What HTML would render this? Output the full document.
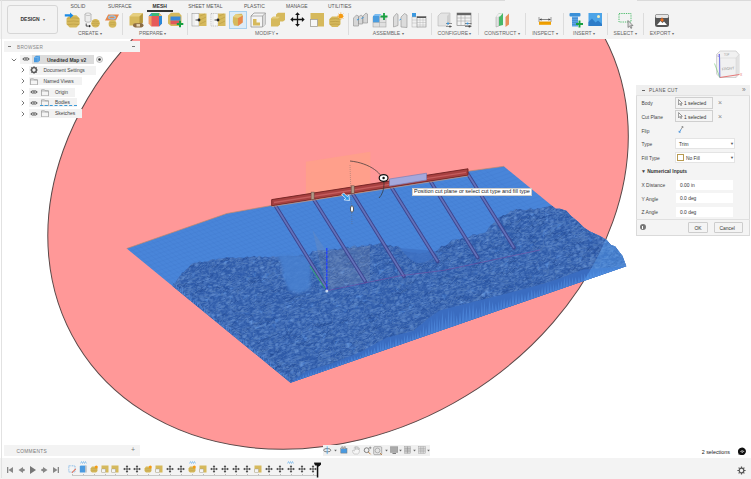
<!DOCTYPE html><html><head><meta charset="utf-8"><style>
*{box-sizing:border-box}
html,body{margin:0;padding:0;width:751px;height:479px;overflow:hidden;background:#fff;font-family:"Liberation Sans",sans-serif;}
.a{position:absolute;white-space:nowrap}
#tb{position:absolute;left:0;top:0;width:751px;height:39px;background:#f3f3f3}
.tab{position:absolute;top:1.6px;font-size:5.0px;color:#555;line-height:8px}
.grp{position:absolute;top:29.5px;font-size:5.1px;color:#666;line-height:7px}
.sep{position:absolute;top:13px;width:1px;height:22px;background:#dcdcdc}
.bt{position:absolute;font-size:4.9px;color:#444;line-height:8px;white-space:nowrap}
.pl{position:absolute;font-size:4.9px;color:#444;line-height:8px;white-space:nowrap}
.fld{position:absolute;background:#fff;border:1px solid #e4e4e4}
</style></head><body>
<svg class="a" style="left:0;top:0" width="751" height="479" viewBox="0 0 751 479">
<defs><clipPath id="tc"><polygon points="126.7,248.5 226.7,213.5 273.0,205.2 468.0,171.2 503.8,166.3 555.7,208.8 560.0,208.8 566.3,210.7 571.4,216.3 577.6,221.3 583.9,227.6 590.0,231.4 600.0,236.0 606.7,240.0 610.9,245.0 615.0,246.3 622.5,255.9 626.3,266.3 290.5,382.7"/></clipPath>
<mask id="outm"><rect width="751" height="479" fill="#fff"/><ellipse cx="338.05" cy="185.95" rx="305.18" ry="245.85" transform="rotate(148.55 338.05 185.95)" fill="#000"/></mask></defs>
<ellipse cx="338.05" cy="185.95" rx="305.18" ry="245.85" transform="rotate(148.55 338.05 185.95)" fill="#ff9898" stroke="#5a4848" stroke-width="1"/>
<g clip-path="url(#tc)">
<rect x="100" y="150" width="540" height="240" fill="#4985d9"/>




































































































<path d="M126,248.3L640,68.9M126,252.5L640,73.1M126,256.7L640,77.3M126,260.9L640,81.5M126,265.1L640,85.7M126,269.3L640,89.9M126,273.5L640,94.1M126,277.7L640,98.3M126,281.9L640,102.5M126,286.1L640,106.7M126,290.3L640,110.9M126,294.5L640,115.1M126,298.7L640,119.3M126,302.9L640,123.5M126,307.1L640,127.7M126,311.3L640,131.9M126,315.5L640,136.1M126,319.7L640,140.3M126,323.9L640,144.5M126,328.1L640,148.7M126,332.3L640,152.9M126,336.5L640,157.1M126,340.7L640,161.3M126,344.9L640,165.5M126,349.1L640,169.7M126,353.3L640,173.9M126,357.5L640,178.1M126,361.7L640,182.3M126,365.9L640,186.5M126,370.1L640,190.7M126,374.3L640,194.9M126,378.5L640,199.1M126,382.7L640,203.3M126,386.9L640,207.5M126,391.1L640,211.7M126,395.3L640,215.9M126,399.5L640,220.1M126,403.7L640,224.3M126,407.9L640,228.5M126,412.1L640,232.7M126,416.3L640,236.9M126,420.5L640,241.1M126,424.7L640,245.3M126,428.9L640,249.5M126,433.1L640,253.7M126,437.3L640,257.9M126,441.5L640,262.1M126,445.7L640,266.3M126,449.9L640,270.5M126,454.1L640,274.7M126,458.3L640,278.9M126,462.5L640,283.1M126,466.7L640,287.3M126,470.9L640,291.5M126,475.1L640,295.7M126,479.3L640,299.9M126,483.5L640,304.1M126,487.7L640,308.3M126,491.9L640,312.5M126,496.1L640,316.7M126,500.3L640,320.9M126,504.5L640,325.1M126,508.7L640,329.3M126,512.9L640,333.5M126,517.1L640,337.7M126,521.3L640,341.9M126,525.5L640,346.1M126,529.7L640,350.3M126,533.9L640,354.5M126,538.1L640,358.7M-73.5,150L231.4,400M-67.5,150L237.4,400M-61.5,150L243.4,400M-55.5,150L249.4,400M-49.5,150L255.4,400M-43.5,150L261.4,400M-37.5,150L267.4,400M-31.5,150L273.4,400M-25.5,150L279.4,400M-19.5,150L285.4,400M-13.5,150L291.4,400M-7.5,150L297.4,400M-1.5,150L303.4,400M4.5,150L309.4,400M10.5,150L315.4,400M16.5,150L321.4,400M22.5,150L327.4,400M28.5,150L333.4,400M34.5,150L339.4,400M40.5,150L345.4,400M46.5,150L351.4,400M52.5,150L357.4,400M58.5,150L363.4,400M64.5,150L369.4,400M70.5,150L375.4,400M76.5,150L381.4,400M82.5,150L387.4,400M88.5,150L393.4,400M94.5,150L399.4,400M100.5,150L405.4,400M106.5,150L411.4,400M112.5,150L417.4,400M118.5,150L423.4,400M124.5,150L429.4,400M130.5,150L435.4,400M136.5,150L441.4,400M142.5,150L447.4,400M148.5,150L453.4,400M154.5,150L459.4,400M160.5,150L465.4,400M166.5,150L471.4,400M172.5,150L477.4,400M178.5,150L483.4,400M184.5,150L489.4,400M190.5,150L495.4,400M196.5,150L501.4,400M202.5,150L507.4,400M208.5,150L513.4,400M214.5,150L519.4,400M220.5,150L525.4,400M226.5,150L531.4,400M232.5,150L537.4,400M238.5,150L543.4,400M244.5,150L549.4,400M250.5,150L555.4,400M256.5,150L561.4,400M262.5,150L567.4,400M268.5,150L573.4,400M274.5,150L579.4,400M280.5,150L585.4,400M286.5,150L591.4,400M292.5,150L597.4,400M298.5,150L603.4,400M304.5,150L609.4,400M310.5,150L615.4,400M316.5,150L621.4,400M322.5,150L627.4,400M328.5,150L633.4,400M334.5,150L639.4,400M340.5,150L645.4,400M346.5,150L651.4,400M352.5,150L657.4,400M358.5,150L663.4,400M364.5,150L669.4,400M370.5,150L675.4,400M376.5,150L681.4,400M382.5,150L687.4,400M388.5,150L693.4,400M394.5,150L699.4,400M400.5,150L705.4,400M406.5,150L711.4,400M412.5,150L717.4,400M418.5,150L723.4,400M424.5,150L729.4,400M430.5,150L735.4,400M436.5,150L741.4,400M442.5,150L747.4,400M448.5,150L753.4,400M454.5,150L759.4,400M460.5,150L765.4,400" stroke="#3a6ec0" stroke-width="0.3" fill="none" opacity="0.45"/>
<clipPath id="mc"><polygon points="164.8,299.2 166.4,296.6 167.5,295.0 168.2,293.0 169.4,290.5 170.7,287.4 172.4,286.8 173.2,283.0 175.6,282.7 177.2,279.4 179.4,276.5 181.0,275.1 181.9,272.6 183.8,272.3 185.7,270.0 188.3,267.8 190.3,265.3 191.8,263.9 194.6,262.7 196.8,262.7 199.5,261.6 202.6,262.2 204.5,261.5 207.4,261.8 210.3,260.0 213.4,259.0 215.5,260.0 217.9,258.8 220.6,258.7 224.2,257.9 227.2,257.1 229.9,257.7 232.6,257.2 235.8,258.3 238.3,257.5 240.7,257.5 244.1,258.1 247.0,256.4 249.1,257.2 251.4,256.7 254.2,255.8 256.8,257.3 259.6,256.0 262.6,257.4 264.9,256.4 268.1,257.3 271.0,257.1 272.9,255.9 275.6,256.9 279.5,256.2 281.4,256.1 284.2,256.5 287.4,255.7 289.4,255.8 292.6,256.0 296.0,256.2 298.2,255.9 301.1,254.4 304.1,256.0 306.7,255.9 308.9,254.8 310.5,253.8 312.5,251.0 315.5,250.9 318.5,250.3 320.9,250.2 323.9,250.3 326.6,251.2 330.1,249.2 332.2,249.3 334.8,248.4 337.9,250.1 340.0,248.6 342.0,247.3 344.8,247.3 347.9,246.7 349.4,248.3 352.5,246.0 355.1,245.4 357.5,247.3 360.4,246.3 362.2,245.1 364.6,245.8 367.5,245.4 369.8,243.7 372.9,245.2 375.4,244.4 377.9,243.9 379.7,243.0 382.4,242.4 384.6,243.6 387.4,245.2 390.8,245.2 393.4,247.0 396.0,246.1 397.7,246.3 400.0,247.6 402.8,250.6 405.4,251.0 407.7,252.1 409.5,252.1 413.0,252.7 415.3,252.3 417.1,253.4 419.8,253.7 423.1,252.4 424.9,253.4 427.8,251.2 429.6,250.8 433.0,252.1 434.6,251.8 437.8,250.0 439.2,248.4 441.2,245.8 444.4,246.0 446.1,245.3 448.2,243.8 450.9,240.9 452.4,239.7 454.9,239.8 457.4,238.9 459.7,239.5 462.5,237.8 465.2,238.3 467.5,237.7 470.1,236.2 472.6,234.4 475.0,234.2 477.0,235.1 479.6,233.8 482.8,233.4 484.8,232.7 486.9,231.2 488.2,228.6 490.2,225.7 492.6,224.1 494.2,222.6 496.5,219.7 497.9,217.7 500.3,216.9 502.8,215.2 505.3,214.9 508.1,213.5 510.9,210.7 513.0,211.1 515.8,209.0 517.4,209.6 519.9,208.9 522.4,209.8 525.7,210.2 527.5,209.7 530.6,208.1 533.4,209.8 535.1,209.5 537.8,208.1 541.1,208.7 542.6,207.4 545.9,206.9 548.3,206.6 551.8,205.6 554.4,206.4 556.6,205.9 560.0,206.0 640.0,250.0 640.0,400.0 165.0,400.0"/></clipPath>
<polygon points="164.8,299.2 166.4,296.6 167.5,295.0 168.2,293.0 169.4,290.5 170.7,287.4 172.4,286.8 173.2,283.0 175.6,282.7 177.2,279.4 179.4,276.5 181.0,275.1 181.9,272.6 183.8,272.3 185.7,270.0 188.3,267.8 190.3,265.3 191.8,263.9 194.6,262.7 196.8,262.7 199.5,261.6 202.6,262.2 204.5,261.5 207.4,261.8 210.3,260.0 213.4,259.0 215.5,260.0 217.9,258.8 220.6,258.7 224.2,257.9 227.2,257.1 229.9,257.7 232.6,257.2 235.8,258.3 238.3,257.5 240.7,257.5 244.1,258.1 247.0,256.4 249.1,257.2 251.4,256.7 254.2,255.8 256.8,257.3 259.6,256.0 262.6,257.4 264.9,256.4 268.1,257.3 271.0,257.1 272.9,255.9 275.6,256.9 279.5,256.2 281.4,256.1 284.2,256.5 287.4,255.7 289.4,255.8 292.6,256.0 296.0,256.2 298.2,255.9 301.1,254.4 304.1,256.0 306.7,255.9 308.9,254.8 310.5,253.8 312.5,251.0 315.5,250.9 318.5,250.3 320.9,250.2 323.9,250.3 326.6,251.2 330.1,249.2 332.2,249.3 334.8,248.4 337.9,250.1 340.0,248.6 342.0,247.3 344.8,247.3 347.9,246.7 349.4,248.3 352.5,246.0 355.1,245.4 357.5,247.3 360.4,246.3 362.2,245.1 364.6,245.8 367.5,245.4 369.8,243.7 372.9,245.2 375.4,244.4 377.9,243.9 379.7,243.0 382.4,242.4 384.6,243.6 387.4,245.2 390.8,245.2 393.4,247.0 396.0,246.1 397.7,246.3 400.0,247.6 402.8,250.6 405.4,251.0 407.7,252.1 409.5,252.1 413.0,252.7 415.3,252.3 417.1,253.4 419.8,253.7 423.1,252.4 424.9,253.4 427.8,251.2 429.6,250.8 433.0,252.1 434.6,251.8 437.8,250.0 439.2,248.4 441.2,245.8 444.4,246.0 446.1,245.3 448.2,243.8 450.9,240.9 452.4,239.7 454.9,239.8 457.4,238.9 459.7,239.5 462.5,237.8 465.2,238.3 467.5,237.7 470.1,236.2 472.6,234.4 475.0,234.2 477.0,235.1 479.6,233.8 482.8,233.4 484.8,232.7 486.9,231.2 488.2,228.6 490.2,225.7 492.6,224.1 494.2,222.6 496.5,219.7 497.9,217.7 500.3,216.9 502.8,215.2 505.3,214.9 508.1,213.5 510.9,210.7 513.0,211.1 515.8,209.0 517.4,209.6 519.9,208.9 522.4,209.8 525.7,210.2 527.5,209.7 530.6,208.1 533.4,209.8 535.1,209.5 537.8,208.1 541.1,208.7 542.6,207.4 545.9,206.9 548.3,206.6 551.8,205.6 554.4,206.4 556.6,205.9 560.0,206.0 640.0,250.0 640.0,400.0 165.0,400.0" fill="#2e5aa8"/>
<path clip-path="url(#mc)" d="M364.2,213.8L370.6,211.4L361.9,219.0zM286.9,223.1L290.5,223.1L288.7,225.0zM414.9,239.1L419.5,239.6L417.1,243.2zM559.5,334.3L563.9,334.5L557.5,336.1zM200.8,208.0L207.3,208.1L201.3,209.5zM270.8,323.5L276.0,324.8L273.6,325.5zM277.2,233.2L281.0,233.3L279.6,235.2zM511.7,389.5L516.7,390.8L515.8,394.3zM309.7,337.8L317.2,337.6L307.7,339.8zM174.5,278.1L181.0,280.0L172.1,279.9zM518.3,331.0L523.1,329.2L519.9,336.0zM278.7,212.3L281.4,212.5L280.7,214.7zM295.0,372.4L297.1,372.9L294.5,374.5zM473.6,388.3L476.4,387.1L475.3,391.0zM358.8,203.5L365.2,202.2L358.8,206.5zM304.8,359.1L308.3,359.3L305.5,361.1zM533.3,297.2L536.0,297.2L535.2,298.2zM287.1,388.2L291.1,386.5L287.4,390.1zM302.3,298.1L307.2,296.4L304.8,301.4zM499.6,285.7L501.5,284.9L499.2,288.0zM279.3,371.7L282.0,371.6L278.8,372.6zM163.0,360.4L168.0,358.7L163.5,362.8zM285.5,322.4L289.3,320.8L287.6,323.8zM605.9,265.5L607.8,266.6L607.1,267.8zM513.7,212.5L517.7,210.6L516.2,216.7zM582.3,343.6L586.8,344.4L581.1,345.2zM627.9,337.4L631.9,338.2L631.3,339.6zM408.8,325.6L416.1,326.0L406.1,330.5zM260.8,330.0L265.5,331.1L263.9,332.2zM594.8,349.0L598.6,348.3L593.3,349.9zM538.3,359.4L542.0,359.0L539.8,361.3zM323.8,347.9L329.7,348.4L323.6,350.0zM474.2,350.5L477.3,350.8L475.1,353.2zM580.6,215.8L583.6,215.2L579.9,217.8zM432.4,207.5L436.0,207.0L434.4,209.3zM486.4,312.8L493.1,314.3L489.4,316.9zM469.4,240.3L471.2,241.5L470.5,241.5zM264.8,223.1L268.2,222.4L265.1,226.5zM294.4,318.2L300.3,317.2L297.4,322.0zM530.3,244.5L535.0,244.8L529.7,246.2zM430.9,276.5L434.0,278.0L434.4,278.9zM338.4,288.1L340.8,289.1L338.0,290.1zM341.5,205.2L343.9,204.4L341.9,207.6zM574.2,321.6L580.9,323.3L573.7,324.2zM484.9,256.8L490.4,258.1L484.5,259.0zM604.0,218.5L608.7,219.7L605.6,220.3zM481.6,319.4L484.2,320.6L482.8,321.5zM406.4,300.8L409.1,298.3L405.5,302.7zM573.7,245.3L578.1,245.8L577.2,247.6zM236.1,212.7L241.4,214.6L236.1,216.1zM347.0,268.0L351.0,265.5L348.7,271.0zM188.9,307.3L191.9,306.7L190.1,309.6zM538.1,258.3L541.0,258.8L541.0,261.8zM252.0,318.6L254.0,318.6L253.3,319.4zM314.1,325.9L317.1,326.0L314.5,327.4zM590.5,204.8L595.3,201.8L590.6,209.4zM562.9,308.3L567.0,308.2L564.9,311.1zM630.1,359.5L633.1,358.4L628.2,362.0zM630.5,307.1L633.4,307.0L629.8,309.1zM332.5,217.3L336.3,216.1L333.9,219.9zM594.5,379.5L598.7,380.6L594.0,382.5zM593.9,231.2L597.3,230.7L593.8,232.8zM471.8,235.6L477.5,236.5L472.3,238.9zM615.1,337.1L617.9,337.9L615.6,339.4zM561.4,311.8L566.1,310.6L560.9,313.8zM348.4,290.4L352.3,290.4L350.4,292.6zM635.9,267.8L640.7,269.0L637.7,272.0zM186.9,316.7L191.2,318.2L185.4,318.7zM207.9,353.7L212.2,352.4L208.0,359.6zM631.5,294.8L635.7,292.9L632.0,297.3zM539.6,290.7L546.6,287.5L537.7,293.6zM445.7,309.2L451.5,311.0L449.0,310.9zM493.0,338.7L500.5,337.1L490.6,343.1zM274.5,232.7L279.8,231.5L277.6,237.7zM331.2,352.6L335.4,354.0L331.3,356.9zM187.7,233.9L191.8,234.3L186.8,238.3zM412.1,293.7L414.1,292.2L411.7,296.1zM190.4,238.6L194.1,238.3L190.5,241.8zM211.7,307.1L218.4,306.9L216.3,309.5zM371.1,293.3L376.5,292.2L373.1,295.8zM475.0,334.9L479.1,335.1L475.3,337.3zM416.5,230.2L422.7,229.6L417.1,232.5zM616.4,278.8L620.3,276.4L618.3,280.8zM638.1,378.5L641.8,378.7L640.2,381.3zM548.3,337.5L553.2,338.7L547.1,339.9zM634.3,372.6L639.4,373.4L632.4,374.5zM272.3,313.1L278.4,314.9L271.3,316.9zM232.6,265.4L234.9,266.0L232.4,268.4zM239.1,273.3L245.5,272.8L241.3,276.7zM202.2,251.5L207.0,250.2L204.9,253.4zM610.2,353.6L613.2,353.4L611.2,354.5zM315.6,358.4L318.3,357.8L318.4,360.2zM621.8,235.6L626.7,236.3L621.5,237.7zM560.5,335.2L564.7,336.5L563.0,340.0zM292.0,211.2L296.3,209.6L290.2,214.8zM539.3,341.2L543.3,339.3L542.4,343.8zM224.2,202.4L227.7,202.5L222.7,205.3zM581.2,379.5L585.5,377.4L582.8,383.3zM466.5,374.7L469.0,376.0L468.2,375.9zM249.7,353.3L252.8,354.2L251.3,356.2zM197.3,210.3L200.9,210.3L195.1,213.9zM249.9,296.3L254.1,294.7L252.4,300.5zM454.1,216.4L459.0,217.8L453.3,220.4zM603.4,309.2L607.3,308.0L602.1,310.2zM454.8,231.6L459.7,231.7L454.5,237.3zM214.2,293.8L221.0,294.5L217.1,296.3zM212.8,379.3L216.3,380.3L215.5,381.2zM389.1,289.0L396.3,290.6L392.3,293.3zM258.6,326.0L261.2,323.8L259.0,327.6zM475.1,323.7L478.1,323.4L477.3,326.7zM296.9,385.3L301.5,385.8L295.6,387.2zM281.5,308.3L283.9,307.2L284.0,311.0zM283.6,356.2L286.8,354.8L282.5,358.8zM201.2,247.3L203.5,245.7L202.8,248.7zM518.8,366.2L523.7,366.7L518.2,367.5zM546.5,342.7L551.6,343.3L543.9,345.6zM223.9,363.1L229.9,365.0L226.1,364.9zM569.2,325.5L572.9,326.4L570.7,328.5zM628.6,316.9L632.8,315.3L630.0,319.7zM259.8,268.8L265.0,267.7L258.5,272.4zM462.4,374.8L466.1,375.2L463.2,377.8zM544.5,229.7L549.5,230.2L543.1,233.9zM166.6,283.4L169.5,282.7L167.1,284.4zM328.8,361.8L333.2,361.2L329.2,363.5zM481.2,330.0L489.2,328.4L483.6,331.7zM415.7,234.3L422.0,232.1L414.8,236.4zM288.4,367.3L292.1,364.9L288.5,370.7zM446.3,332.6L451.4,330.6L447.0,334.9zM224.0,374.6L228.0,375.5L222.9,376.1zM236.8,295.5L241.5,295.5L237.7,296.9zM405.1,231.9L409.7,230.7L403.3,236.5zM287.8,327.4L290.8,326.5L288.0,328.8zM187.3,236.5L191.1,236.5L188.6,238.1zM192.2,283.1L195.2,284.1L196.0,287.0zM319.1,361.8L324.4,363.0L322.0,365.0zM215.7,387.4L220.0,387.9L216.6,389.3zM381.7,313.8L385.1,313.6L384.0,315.1zM629.9,344.2L636.8,341.7L629.4,348.8zM618.5,270.2L621.8,269.8L618.3,271.7zM374.2,277.1L378.3,276.9L376.2,279.0zM516.6,260.8L520.4,260.5L517.3,262.0zM547.1,213.3L554.8,215.5L548.8,216.0zM558.5,330.8L564.1,331.7L561.4,333.2zM600.9,289.6L606.2,290.5L602.8,292.0zM286.6,266.2L289.0,265.7L288.3,267.8zM393.3,218.8L401.0,218.6L397.2,223.3zM338.4,291.2L341.4,290.4L337.6,293.1zM394.9,247.6L398.3,247.7L396.8,250.4zM260.3,207.0L265.1,204.2L260.4,209.6zM593.2,389.1L596.1,387.9L596.0,391.7zM253.4,298.4L257.1,298.3L252.8,299.8zM333.0,331.1L338.3,332.4L335.0,334.0zM267.4,361.1L272.0,361.5L266.8,363.2zM297.6,384.3L302.9,382.5L296.3,387.7zM368.2,236.8L372.2,238.1L368.7,239.1zM260.6,239.7L264.2,240.0L262.7,242.8zM544.2,313.7L547.3,312.3L546.4,316.1zM625.0,318.4L629.6,317.9L626.7,322.4zM276.3,332.5L279.7,330.6L278.7,335.0zM582.5,358.8L587.6,357.4L583.8,363.5zM389.5,383.2L393.4,382.5L391.3,385.0zM359.0,309.5L366.7,308.2L358.9,311.6zM177.8,294.9L182.7,293.1L176.0,297.1zM586.8,244.9L591.8,244.2L587.8,246.6zM482.6,301.2L485.9,301.5L481.7,305.4zM246.3,247.5L250.6,247.9L247.1,251.3zM448.4,219.0L452.4,216.7L451.0,222.1zM289.4,292.5L294.4,292.3L291.0,294.9zM243.2,355.5L247.8,353.5L242.2,357.5zM245.0,263.9L250.1,265.8L247.1,266.8zM394.6,303.4L399.8,301.0L394.1,308.7zM561.6,204.9L563.6,205.1L563.1,207.3zM239.1,276.5L241.7,276.0L239.7,278.2zM576.5,307.8L579.9,308.1L579.4,309.3zM524.8,305.5L527.9,303.7L526.9,307.4zM548.3,200.9L552.5,201.3L549.5,205.5zM334.6,367.5L339.4,366.7L337.3,370.8zM308.0,314.5L313.2,312.5L309.7,317.8zM609.6,219.7L614.9,219.2L612.4,221.6zM315.5,351.3L317.7,350.6L315.8,354.3zM191.3,258.2L196.3,257.2L194.3,261.4zM358.5,382.4L362.6,381.9L357.9,385.6zM611.9,381.6L618.4,383.3L613.8,383.2zM171.8,382.7L179.3,380.6L171.6,387.9zM310.1,250.7L316.0,252.9L309.8,253.9zM308.4,361.2L313.8,361.1L309.7,363.0zM210.7,302.9L216.2,304.2L212.4,304.2zM507.9,388.0L515.4,388.9L510.1,391.9z" fill="#2d5aac" opacity="0.7"/>
<path clip-path="url(#mc)" d="M354.9,302.0L359.1,302.3L354.3,305.7zM475.1,303.7L482.8,304.2L473.9,306.3zM200.3,253.0L204.1,251.2L198.4,257.2zM351.8,207.9L353.9,208.3L352.4,209.6zM468.7,208.3L475.9,207.1L471.2,213.0zM596.7,343.0L602.4,344.8L598.5,346.9zM204.1,299.9L209.1,297.8L207.2,302.3zM168.4,287.2L175.8,286.9L167.6,289.6zM208.8,358.6L213.5,359.1L208.3,360.9zM594.9,294.4L599.2,292.5L595.1,295.7zM435.7,268.4L440.7,266.5L438.6,270.2zM200.8,347.6L202.6,347.2L199.7,349.6zM460.7,300.4L465.6,301.6L460.3,304.2zM346.3,242.5L349.1,242.9L346.7,247.0zM551.1,225.2L553.7,223.0L550.7,228.5zM451.5,262.3L454.7,260.9L450.0,263.9zM301.0,307.7L305.5,308.5L300.3,309.5zM327.9,207.1L330.2,204.9L326.2,210.1zM423.1,212.0L425.7,211.6L424.0,213.1zM368.4,229.7L370.3,229.2L368.3,232.2zM242.4,266.1L244.7,267.1L242.4,268.6zM594.0,317.9L597.9,315.8L592.9,321.0zM558.0,234.8L561.0,234.4L558.0,236.0zM638.1,339.1L642.2,336.0L638.9,344.3zM269.1,324.1L270.6,324.2L268.2,325.5zM358.4,257.2L361.0,255.9L357.5,258.1zM287.7,305.2L292.6,304.7L287.0,308.2zM160.6,238.4L167.8,240.4L161.3,241.7zM624.2,312.6L630.2,311.5L622.5,317.7zM330.7,276.2L335.8,277.5L333.2,277.5zM305.5,281.3L308.8,278.8L306.9,285.6zM468.5,332.3L472.0,330.8L471.0,335.5zM492.9,295.1L497.4,296.3L494.2,297.8zM381.8,231.3L385.6,229.0L380.4,235.6zM474.9,247.5L476.9,248.0L476.3,249.1zM426.4,250.3L428.8,249.9L425.0,252.3zM556.8,255.6L561.8,255.1L556.0,259.2zM615.4,338.3L618.4,335.9L614.0,342.3zM488.6,373.6L491.1,373.0L490.6,375.2zM206.6,284.9L211.6,286.1L209.3,287.4zM619.1,327.2L622.8,328.2L622.0,331.1zM537.5,334.8L544.1,336.5L536.0,338.8zM340.0,272.1L345.0,270.1L342.7,274.7zM619.8,375.9L622.2,377.2L622.8,378.0zM389.2,319.4L391.6,320.4L390.5,321.4zM370.7,228.4L373.9,229.9L371.7,230.4zM285.1,220.8L289.2,221.8L285.8,223.8zM428.8,358.7L432.3,357.0L429.0,360.1zM368.9,373.3L372.4,374.1L368.1,376.0zM437.1,252.1L443.2,252.7L437.6,256.1zM174.9,263.4L178.1,261.6L174.9,266.4zM410.0,388.0L416.6,387.9L411.8,389.9zM586.3,280.0L588.8,279.6L586.8,281.3zM395.4,288.8L400.4,287.8L397.0,291.7zM325.3,282.8L327.5,281.4L324.7,284.1zM173.8,336.5L175.6,335.5L175.0,339.0zM247.2,221.9L254.0,220.1L244.6,223.8zM213.7,345.1L220.0,342.8L214.9,348.9zM326.7,217.6L330.0,216.2L327.3,220.6zM226.6,205.3L233.2,205.8L225.2,209.1zM209.0,336.6L213.0,336.7L210.3,338.6zM194.6,210.5L201.1,212.2L192.1,215.3zM319.1,289.0L324.0,289.4L319.8,291.6zM578.7,347.1L584.0,347.3L578.1,351.2zM503.5,263.5L509.2,261.1L506.1,266.8zM634.0,267.8L638.9,265.4L631.8,271.2zM375.0,369.6L378.5,370.7L374.4,370.8zM459.8,223.2L463.2,221.6L459.1,226.4zM400.3,221.3L404.1,219.4L400.2,223.0zM491.3,386.6L497.9,386.7L490.9,389.9zM391.7,210.4L396.3,209.5L395.7,214.7zM299.9,335.0L305.6,334.7L303.7,338.3zM187.7,282.4L190.7,280.2L185.8,285.8zM166.8,337.0L170.5,338.0L169.0,341.2zM505.3,258.8L508.8,259.4L507.8,261.4zM231.5,235.0L234.9,236.3L231.3,237.7zM256.2,253.2L260.0,251.9L255.4,255.4zM384.6,231.2L388.9,231.3L383.5,233.7zM639.1,280.6L642.3,279.8L637.5,284.1zM179.8,317.5L185.9,317.8L182.5,320.5zM165.2,378.7L168.8,379.9L164.5,381.9zM540.0,291.1L545.2,289.0L542.0,294.3zM583.3,382.5L586.4,380.8L585.2,385.1zM575.2,335.3L578.8,335.3L577.3,336.8zM262.7,338.5L268.7,336.1L261.0,340.9zM400.3,370.7L407.0,368.3L402.2,375.9zM392.2,255.9L400.1,255.1L391.0,259.9zM455.5,221.3L459.2,222.3L457.6,222.2zM286.6,267.5L290.0,265.7L286.3,268.5zM533.2,289.5L541.1,287.2L533.9,294.8zM568.0,300.4L571.1,300.5L569.2,303.6zM492.2,289.6L496.2,289.0L490.9,291.0zM162.4,307.6L166.3,305.8L164.1,310.0zM203.1,252.1L206.1,251.7L204.0,254.0zM277.6,374.3L283.4,372.1L279.4,378.6zM246.7,227.3L250.6,227.3L247.7,229.3zM189.8,256.2L194.4,254.4L189.7,258.6zM226.4,349.7L229.4,349.3L225.2,351.3zM603.1,372.9L605.7,373.7L602.5,375.3zM184.8,373.8L186.5,374.1L184.4,376.6zM361.6,300.6L368.5,299.2L362.6,302.7zM373.6,264.6L380.6,262.1L374.1,267.3zM436.9,267.6L441.7,268.7L437.6,269.1zM181.9,370.4L186.2,369.7L179.8,374.4zM545.0,217.9L548.4,216.5L547.4,221.8zM275.6,249.1L279.7,247.8L273.8,252.3zM350.3,299.4L354.7,299.7L349.9,301.2zM559.9,232.1L563.7,232.1L559.7,233.3zM379.9,304.9L383.7,303.3L381.1,306.5zM619.1,314.8L622.5,313.7L620.7,316.1zM599.4,293.3L605.0,291.1L596.9,296.9zM212.9,243.2L218.2,241.8L216.6,247.9zM473.2,209.1L478.9,208.8L472.9,213.8zM435.2,220.1L440.9,219.6L435.8,222.8zM235.7,321.0L238.3,321.2L237.9,322.8zM395.8,342.9L399.1,342.4L395.8,345.2zM248.0,372.9L253.4,370.9L247.9,377.1zM402.4,371.3L408.8,369.5L401.1,374.7zM272.2,241.1L275.2,239.4L274.8,245.5zM519.2,245.0L522.7,245.8L520.2,248.2zM228.2,287.4L234.8,287.7L230.6,289.6zM269.3,365.2L272.8,365.5L270.5,367.5zM236.9,331.1L238.9,332.0L238.3,332.1zM362.7,319.6L366.4,321.0L362.1,321.4zM620.8,381.5L627.1,382.0L620.7,384.4zM620.0,208.8L626.8,209.4L621.5,213.7zM321.4,231.1L327.1,228.9L320.4,236.5zM555.0,382.8L559.2,381.2L556.3,386.1zM378.5,270.2L385.6,268.7L379.2,275.2zM420.8,363.9L425.1,362.9L420.2,368.6zM500.5,311.4L503.5,312.8L501.1,314.5zM367.3,377.0L370.2,375.5L368.1,378.8zM553.0,350.1L555.2,351.4L553.6,353.0zM496.8,325.8L499.4,325.4L496.4,327.3zM481.5,294.2L486.0,291.3L484.5,297.5zM575.1,321.0L579.0,320.0L574.0,322.7zM587.2,365.0L591.6,365.2L587.6,367.9zM298.5,229.5L301.9,228.6L298.4,230.6zM213.5,251.6L219.4,249.1L216.8,254.1zM342.1,202.1L346.7,202.4L343.5,204.9zM259.3,310.1L262.8,311.4L261.2,314.1zM203.2,287.4L206.4,285.5L205.5,288.5zM407.7,386.5L410.8,386.3L407.7,389.3zM173.8,241.7L180.5,240.1L174.7,245.4zM420.0,212.8L422.3,211.5L420.4,215.3zM448.3,367.8L452.3,367.9L450.4,371.2zM295.0,341.5L299.3,339.9L295.0,344.0zM578.7,257.5L582.5,256.7L579.9,262.4zM522.1,364.0L525.6,363.9L522.5,365.0zM166.4,319.1L172.4,318.8L164.8,321.5zM228.5,274.7L230.6,274.7L229.6,276.4zM321.6,224.4L325.6,222.5L321.1,227.7zM215.5,338.9L219.2,339.9L216.7,340.4zM409.2,305.7L415.0,304.3L408.3,310.8zM371.4,344.9L373.9,344.5L371.6,348.3zM544.8,225.6L547.9,223.8L542.6,227.8zM250.2,380.4L257.4,376.9L250.8,385.6zM388.1,259.4L392.8,257.7L390.4,262.3zM615.6,241.8L619.5,240.8L617.8,243.3zM375.7,288.7L381.7,287.5L374.5,290.4zM228.1,353.0L231.7,352.8L231.6,358.2zM403.5,227.2L410.3,228.2L407.4,231.9zM559.6,387.1L564.2,385.2L559.3,390.0zM567.4,307.7L570.2,307.2L566.3,310.8zM582.3,230.8L585.6,231.6L583.3,231.7zM509.7,332.6L512.9,331.4L513.5,335.1zM308.1,221.8L314.3,219.1L309.9,225.4zM242.9,239.4L245.0,239.0L244.3,240.9zM164.6,331.2L169.0,331.3L165.2,334.0zM399.0,282.7L404.1,283.6L402.7,285.7zM527.1,328.9L532.1,327.5L531.5,333.6zM587.7,238.1L593.7,239.3L590.3,241.8zM250.3,338.2L253.4,337.8L252.0,339.1zM399.2,311.1L406.3,311.0L397.5,315.6zM229.7,297.3L233.4,294.8L229.9,299.9zM392.5,367.0L398.3,365.2L392.0,371.0zM456.8,371.1L460.3,370.3L456.2,374.8zM556.4,224.4L564.4,222.0L557.4,228.5zM181.4,231.2L184.8,229.8L182.3,233.3zM493.0,324.8L495.6,322.7L492.5,328.6zM547.2,331.6L550.9,333.8L546.1,336.5zM358.4,296.8L363.6,294.2L360.2,299.1zM345.9,342.8L353.5,343.2L348.4,347.9zM244.4,383.5L250.2,385.0L245.3,387.2zM494.3,266.2L496.3,264.4L496.0,268.1zM187.6,351.6L192.3,351.6L190.8,354.4zM161.4,217.6L164.9,218.3L164.1,222.1zM503.0,387.1L506.3,387.3L501.9,388.3zM440.7,221.5L446.3,219.3L442.8,224.0zM438.9,387.5L445.9,384.6L436.8,391.8zM255.6,257.8L257.5,256.3L255.0,259.3zM506.6,356.9L510.2,356.1L506.6,359.2zM335.9,200.1L343.2,201.7L333.8,202.8zM587.9,223.2L592.4,224.4L587.5,226.3zM542.4,235.0L544.8,234.3L543.4,237.0z" fill="#4a7fd0" opacity="0.7"/>
<path clip-path="url(#mc)" d="M459.5,297.3L463.3,296.3L461.6,298.3zM290.5,372.1L294.3,370.8L292.4,374.5zM412.9,245.3L415.0,246.3L412.2,246.8zM460.2,367.2L462.8,366.1L460.2,369.8zM447.4,331.6L449.4,332.0L446.1,333.1zM195.8,217.2L200.0,217.4L197.3,221.0zM487.2,277.0L491.9,277.2L485.4,279.7zM520.4,359.4L524.3,358.5L522.3,360.9zM191.2,274.1L194.9,271.2L193.9,279.1zM423.6,336.7L426.8,336.6L424.9,338.7zM393.1,373.3L396.3,373.2L392.5,375.4zM519.8,278.4L523.9,278.5L519.6,279.8zM584.7,323.0L586.9,322.9L584.7,324.8zM186.1,204.5L190.4,203.1L184.9,207.3zM283.4,342.0L288.3,342.7L287.6,346.1zM381.2,369.3L384.7,368.1L382.9,372.1zM350.9,251.5L357.7,251.4L348.3,256.4zM625.9,355.0L630.1,353.6L627.1,357.4zM335.4,352.4L340.2,354.0L333.9,356.5zM410.3,330.9L414.8,330.1L413.8,335.5zM201.0,296.4L205.1,295.0L200.3,297.7zM385.4,359.5L391.7,359.4L387.5,363.0zM556.0,320.0L558.4,321.1L557.7,321.5zM401.8,361.8L404.7,361.7L402.1,365.7zM399.2,220.9L402.3,219.1L401.1,224.9zM239.0,325.0L241.3,325.8L238.7,326.6zM398.9,256.4L402.7,253.9L400.4,258.2zM392.4,343.9L394.7,343.8L391.4,345.0zM362.4,219.1L365.9,216.4L360.5,222.1zM198.2,259.1L201.9,256.8L198.9,260.8zM462.3,279.4L467.0,277.3L464.3,282.1zM242.6,378.9L246.4,378.0L239.9,384.4zM372.2,296.5L376.3,294.8L375.3,298.6zM445.5,200.9L449.7,200.4L444.1,204.3zM465.7,288.1L468.9,288.3L464.4,289.6zM185.7,298.3L193.6,299.2L186.0,302.6zM472.2,238.2L477.0,237.5L473.7,241.4zM344.6,261.2L351.3,260.7L345.0,263.4zM371.3,318.7L376.5,317.9L374.6,321.2zM503.4,267.2L505.9,268.2L505.5,269.4zM266.3,258.7L271.8,256.6L265.2,261.1zM341.9,201.5L347.0,201.7L341.6,206.5zM353.5,212.4L357.2,212.6L353.0,213.7zM289.4,358.7L292.3,357.4L291.1,359.9zM532.0,367.7L535.9,368.4L529.5,372.0zM639.1,316.9L642.4,317.1L641.5,318.9zM285.4,303.8L291.9,303.0L284.3,305.8zM433.2,255.0L436.0,254.7L436.7,257.9zM251.6,337.4L254.8,336.2L252.9,338.9zM457.5,354.1L460.6,353.6L457.2,356.0zM350.2,221.7L354.4,221.2L349.1,224.5zM596.1,216.7L600.6,218.4L598.8,219.9zM476.3,383.5L478.3,382.1L477.0,384.9zM354.6,329.0L356.9,329.0L352.9,331.7zM532.5,387.7L537.7,385.8L530.6,389.7zM574.7,389.0L576.9,390.0L577.4,390.1zM539.0,380.9L541.9,382.1L539.3,382.6zM345.8,273.2L348.6,270.9L343.9,276.1zM388.8,242.0L392.8,241.6L389.3,244.0zM314.5,268.7L319.7,268.7L316.8,271.8zM476.9,318.3L482.3,319.0L477.9,319.6zM504.4,271.4L507.5,269.9L504.5,273.3zM329.1,273.2L335.2,274.2L332.6,276.8zM552.4,219.3L555.8,218.9L551.2,221.5zM437.8,257.0L440.9,258.8L436.7,258.8zM184.0,263.3L187.3,261.9L182.9,266.8zM176.2,297.5L179.4,298.3L176.9,299.1zM305.6,249.6L307.9,250.4L305.2,251.6zM394.4,350.3L399.6,351.1L396.6,352.1zM273.6,293.6L280.1,291.8L273.6,298.4zM303.7,227.7L306.7,227.7L304.2,229.1zM347.6,201.7L351.4,202.6L348.9,205.9zM484.6,387.1L490.7,385.7L483.0,391.3zM427.6,285.1L434.3,283.4L430.0,286.7zM629.5,323.3L635.6,323.4L633.5,327.5zM237.8,340.3L240.5,341.4L237.5,342.0zM477.5,361.1L480.1,361.2L479.2,363.4zM531.8,275.0L538.7,275.3L531.9,280.0zM291.1,240.5L293.3,239.6L293.6,243.3zM295.2,385.0L300.5,385.8L294.0,389.0zM356.3,326.7L359.9,326.8L357.4,330.9zM194.3,290.8L197.1,290.0L195.5,292.6zM491.8,280.0L494.9,279.0L491.7,282.3zM504.0,205.8L510.3,205.7L507.1,207.9zM238.2,379.9L242.9,378.8L240.5,383.8zM291.6,247.5L294.0,248.1L294.2,251.2zM160.8,346.5L163.7,347.6L159.9,347.6zM324.3,358.1L327.6,358.6L325.9,360.4zM293.3,201.9L297.5,202.6L294.4,204.1zM296.9,272.3L301.0,273.4L295.8,275.3zM275.6,369.6L277.7,370.7L275.6,371.6zM478.9,226.5L482.4,224.6L478.6,227.7zM482.8,240.3L487.1,239.9L482.3,245.1zM268.6,382.6L272.0,382.8L270.0,383.8zM629.5,216.9L635.6,216.9L627.6,221.8zM512.9,268.3L518.8,269.7L511.9,270.5zM214.3,296.9L220.4,295.5L214.9,300.3zM406.1,240.2L411.0,241.2L404.8,245.1zM223.0,211.8L226.6,210.5L224.6,215.0zM392.1,248.0L395.9,248.4L392.7,251.9zM416.8,348.2L421.1,349.9L419.3,350.0zM554.4,364.0L557.1,362.3L555.7,368.2zM269.4,260.4L277.0,260.9L271.1,263.6zM474.8,272.3L478.7,271.6L474.5,277.1zM510.1,268.6L512.0,267.2L512.0,269.4zM308.7,320.1L314.2,317.3L311.3,323.1zM428.8,227.3L434.6,227.2L430.1,229.6zM387.1,252.6L391.3,252.2L387.7,254.6zM615.7,227.6L620.5,226.1L616.7,230.5zM455.9,353.2L459.2,352.8L453.9,356.0zM466.8,290.6L470.1,289.8L468.7,292.4zM271.7,385.2L278.6,386.5L270.1,387.6zM610.6,360.4L615.0,361.2L610.6,363.3zM540.3,349.7L547.7,348.2L539.8,354.2zM372.1,338.0L376.1,337.2L370.8,340.2zM568.7,369.7L571.2,369.5L569.8,371.8zM563.1,315.7L569.7,313.6L565.1,320.9zM317.7,265.1L320.2,265.9L319.8,267.0zM624.1,273.2L627.8,274.8L623.0,274.9zM274.6,207.1L279.0,208.0L277.5,211.9zM471.4,280.5L475.1,278.6L470.8,281.9zM214.2,261.2L217.1,260.3L214.1,263.3zM558.4,206.0L561.3,205.1L559.9,209.1zM378.4,216.4L382.6,214.8L381.3,218.6zM192.4,371.9L194.3,371.9L192.7,374.9zM476.2,365.2L479.8,364.1L477.7,366.6zM473.4,220.2L476.3,217.8L476.9,224.0zM223.2,270.8L226.7,269.0L220.7,275.3zM371.1,350.2L374.7,349.9L372.4,353.7zM418.2,241.3L422.6,239.6L417.1,245.0zM188.8,308.8L193.0,309.9L187.8,313.8zM457.0,353.5L462.8,352.6L458.0,357.8zM516.8,295.8L519.0,296.5L515.5,297.4zM450.7,280.0L455.9,281.9L451.2,284.3zM230.9,334.8L237.0,335.6L234.3,336.9zM185.2,223.2L188.4,220.8L187.3,227.7zM538.6,335.7L543.9,334.1L536.8,338.7zM425.6,324.3L427.7,324.0L424.1,327.0zM338.2,387.1L341.6,387.9L339.9,390.4zM524.3,225.5L530.6,223.7L522.3,228.1zM199.8,364.4L205.3,363.6L201.6,367.8zM481.1,239.1L485.8,237.7L480.0,241.4zM170.8,256.4L175.1,257.8L171.0,259.2zM520.6,228.1L522.9,227.7L520.2,230.7zM318.5,261.0L321.5,259.4L317.0,263.8zM324.9,374.4L330.4,374.0L324.5,376.5zM357.1,342.6L360.7,342.7L358.5,344.3zM228.8,329.5L232.8,330.9L229.7,331.3zM375.5,312.4L378.5,313.9L377.9,316.1zM300.7,333.2L304.3,332.6L301.0,336.2zM364.2,375.0L368.9,374.6L365.5,377.0zM621.7,217.4L624.2,217.1L622.5,220.2zM225.2,380.7L229.4,381.6L225.1,382.1zM208.4,334.1L215.0,331.6L208.0,336.2zM492.7,270.6L495.4,269.0L493.1,273.8zM306.0,334.7L308.4,335.7L307.2,336.6zM339.0,388.9L342.0,390.2L337.1,392.2zM347.0,338.2L352.5,337.0L345.6,341.4zM576.5,243.9L580.7,243.1L576.3,246.6zM581.0,248.8L584.3,248.7L584.9,251.3zM625.5,376.0L629.1,375.5L628.9,379.6zM401.7,294.0L407.1,295.1L400.8,297.8zM353.5,310.1L356.8,307.6L356.7,311.8zM468.2,264.5L473.9,264.3L471.2,267.1zM565.7,230.6L568.9,230.7L567.5,232.5zM489.1,362.7L491.5,362.9L488.2,364.6zM461.7,317.8L464.2,319.3L463.9,321.3zM396.9,381.0L399.3,381.1L397.3,383.6zM620.2,343.4L622.8,341.9L620.3,346.2zM371.0,243.9L375.0,242.3L371.7,247.1z" fill="#3362b4" opacity="0.7"/>
<path clip-path="url(#mc)" d="M167.4,339.3L170.7,339.0L170.5,340.9zM626.9,303.9L631.5,304.2L626.7,305.0zM297.1,288.5L304.3,287.7L296.6,290.4zM585.7,333.6L590.1,333.3L584.1,334.6zM344.6,322.7L348.0,321.0L347.6,324.3zM570.6,384.7L572.9,385.6L571.2,387.3zM388.1,244.6L392.8,243.6L387.8,245.7zM504.8,268.8L507.2,269.3L507.1,270.2zM398.0,235.6L401.0,234.7L400.4,236.9zM328.7,381.5L332.7,382.1L328.6,384.1zM202.1,334.0L205.4,333.9L201.9,336.6zM171.6,244.4L177.3,242.1L171.7,246.4zM287.1,216.0L290.0,215.1L287.4,217.3zM551.1,355.6L554.6,354.7L549.5,356.8zM216.5,313.9L221.4,314.3L216.7,317.0zM346.8,269.8L350.0,271.5L350.2,272.5zM526.5,348.2L529.6,347.9L525.0,349.8zM274.0,270.7L276.9,270.0L273.5,272.4zM518.6,242.1L522.5,242.0L518.5,243.3zM186.9,356.0L193.0,355.0L188.5,359.7zM165.9,304.7L170.1,305.8L167.6,308.5zM385.1,209.1L390.3,207.2L386.2,211.4zM415.1,343.4L420.9,343.6L414.8,345.4zM477.8,341.0L480.8,339.8L478.6,342.2zM254.2,321.2L256.4,321.2L252.9,322.9zM569.2,329.1L573.7,329.5L570.7,330.9zM276.4,276.0L280.0,273.8L277.0,277.6zM379.3,238.9L381.8,237.3L379.2,241.2zM287.3,242.6L294.2,242.0L286.2,247.0zM471.8,348.2L476.9,348.9L473.5,351.4zM485.8,291.5L492.4,291.7L487.7,294.3zM351.5,305.3L355.6,305.3L350.1,306.6zM574.0,235.1L575.6,234.7L574.6,237.6zM335.6,342.0L339.1,340.2L335.0,345.4zM308.5,210.9L313.1,208.9L309.6,212.1zM176.1,388.2L181.6,387.3L175.2,392.9zM543.4,229.8L547.0,228.6L543.4,234.3zM408.9,266.1L412.7,264.1L407.5,268.1zM534.0,364.9L539.9,365.4L532.4,368.6zM269.2,243.1L273.9,243.2L272.7,244.7zM493.1,313.4L496.0,310.8L491.1,316.0zM212.3,235.6L215.1,234.6L211.6,237.8zM592.7,216.1L598.8,215.9L593.4,220.2zM455.8,361.5L461.3,359.7L458.3,366.0zM590.0,257.0L593.7,256.0L590.3,260.8zM356.6,295.2L363.0,296.3L355.4,298.0zM457.7,247.4L461.3,246.2L457.4,249.8zM263.9,277.0L268.9,277.5L264.5,279.1zM484.1,379.0L490.6,378.8L488.9,383.0zM451.9,240.4L455.8,239.8L453.1,243.1zM505.0,216.7L509.4,216.7L504.9,219.8zM486.9,207.1L491.3,207.3L489.4,209.2zM492.0,340.3L497.9,340.1L489.7,344.6zM189.0,253.4L192.7,253.2L187.8,255.0zM336.9,304.7L341.7,305.3L335.2,307.4zM228.1,243.2L231.4,243.2L230.4,245.9zM390.8,323.0L393.9,321.3L389.1,324.5zM491.9,227.9L496.6,225.5L491.7,230.0zM424.3,335.8L427.8,332.7L426.5,337.7zM421.3,383.9L424.4,384.9L421.2,386.2zM273.7,270.7L276.5,271.2L273.4,272.8zM176.4,372.9L179.3,372.0L174.8,376.3zM214.5,204.0L218.1,204.6L215.2,205.4zM333.2,300.4L335.8,299.6L332.4,303.5zM548.4,389.4L550.7,387.9L549.6,391.1zM292.4,248.9L294.3,249.3L293.5,250.1zM468.4,202.9L470.7,203.1L470.7,204.0zM629.1,286.1L632.7,284.2L628.0,287.2zM593.4,365.5L600.1,364.8L593.1,369.8zM340.5,372.3L344.8,370.6L338.7,373.5zM185.0,348.6L191.5,350.6L187.8,351.9zM232.4,339.8L234.5,339.0L231.3,341.4zM511.1,251.9L513.6,252.9L509.7,253.9zM160.4,341.8L166.0,340.7L164.8,344.3zM313.8,236.1L318.3,235.3L314.9,238.3zM282.4,363.2L286.9,363.1L280.5,365.5zM544.9,362.8L547.5,363.9L545.6,364.7zM510.0,201.6L513.8,200.5L508.8,202.9zM347.9,206.3L352.2,206.9L348.7,207.7zM509.3,339.5L513.5,340.7L507.4,342.3zM576.0,209.6L579.5,208.6L578.9,212.2zM556.4,277.2L559.5,276.0L556.2,279.2zM479.8,214.4L484.3,211.8L479.7,218.0zM391.6,201.3L396.3,202.6L395.6,205.1zM376.1,359.1L381.9,359.5L374.7,363.0zM611.2,250.4L613.4,250.0L612.8,253.0zM322.6,212.5L326.5,210.7L324.0,215.3zM171.2,298.3L175.2,298.8L171.5,300.7zM500.9,379.6L506.5,377.6L500.9,384.8zM382.6,208.2L388.3,210.1L382.1,212.4zM433.7,336.6L437.7,335.3L437.1,342.1zM163.3,214.2L166.7,213.7L163.8,216.0zM372.0,334.2L374.9,334.4L371.8,335.5zM297.9,372.2L300.0,371.4L300.0,373.3zM282.4,275.0L286.0,272.1L285.5,279.5zM174.1,283.3L176.9,282.4L173.0,284.4zM609.6,305.4L611.7,304.5L610.2,307.9zM461.2,354.2L467.5,352.6L458.6,358.5zM486.0,202.4L490.6,201.9L486.9,208.0zM224.9,261.0L228.7,260.9L222.9,265.5zM214.8,377.6L219.1,378.0L215.9,380.7zM458.8,356.7L462.7,358.3L461.7,358.6zM577.6,330.3L581.1,331.7L579.0,333.4zM193.9,212.9L197.8,212.5L194.0,217.2zM538.7,267.8L542.6,266.4L538.0,270.8zM628.5,337.1L631.3,336.5L627.9,339.6zM604.0,210.0L609.6,211.8L601.7,215.0zM252.7,260.0L255.9,259.7L253.0,264.2zM496.6,383.7L500.1,383.6L496.5,386.8zM544.0,212.8L549.9,214.8L547.5,215.4zM602.5,217.0L608.0,218.2L605.2,222.2zM331.8,378.8L334.0,377.4L331.6,380.7zM544.5,264.0L549.2,261.5L547.3,268.5zM606.5,343.8L610.2,343.3L608.6,346.0zM498.4,200.8L501.6,200.9L501.3,204.1zM263.0,324.3L266.1,322.5L265.5,327.8zM529.1,331.6L533.0,330.4L528.6,335.3zM237.3,389.4L242.3,390.6L237.3,392.0zM261.9,279.1L265.4,280.5L261.9,282.2zM273.4,226.7L276.8,223.8L273.2,231.5zM355.2,357.2L358.1,357.9L354.2,359.3zM221.8,204.3L226.1,205.7L221.3,205.8zM534.9,298.3L539.4,297.9L534.9,300.0zM394.1,270.2L397.5,269.1L396.4,273.2zM409.4,304.5L412.9,303.4L409.8,305.6zM308.2,328.9L313.0,327.3L309.2,330.9zM352.6,230.4L358.2,228.1L351.3,233.9zM300.2,363.9L306.2,361.7L300.5,368.0zM250.8,219.1L254.7,220.1L249.9,222.7zM455.8,321.0L462.5,322.4L456.3,324.2zM343.9,282.7L348.4,283.0L345.0,285.6zM218.9,203.2L222.0,202.4L220.4,205.8zM501.0,212.0L504.9,212.5L503.4,213.8zM430.4,385.5L435.3,385.9L428.5,387.2zM190.7,331.8L196.1,332.3L191.4,333.7zM398.0,243.5L400.9,243.2L399.2,245.1zM248.5,322.0L252.6,319.8L251.8,324.5zM253.9,326.6L260.1,327.2L255.5,329.2zM487.9,214.5L491.1,214.6L490.1,218.6zM353.5,245.7L358.0,245.6L355.2,247.4zM461.8,311.5L467.3,312.9L461.9,316.6zM320.0,334.2L326.4,332.7L324.1,339.1zM463.2,233.0L467.6,234.9L463.7,234.8zM306.3,293.4L310.7,293.0L306.0,296.2zM257.2,263.8L258.9,264.7L257.4,266.0zM620.2,294.9L623.2,296.3L621.7,297.8zM545.6,233.2L551.1,230.9L543.5,235.4zM318.2,229.6L320.7,228.7L318.9,230.7zM515.6,374.8L521.6,374.1L515.9,376.6zM360.9,255.5L363.7,255.3L360.2,258.1zM305.8,318.3L307.7,319.2L306.0,320.0zM284.1,219.6L289.3,220.6L284.4,223.8zM291.8,301.9L297.3,299.9L292.1,303.2zM275.1,319.1L281.1,319.4L275.1,323.4zM303.4,337.4L307.9,336.7L305.4,341.1zM527.2,289.3L532.2,289.4L531.4,292.5zM304.6,303.6L307.1,304.4L306.2,305.6zM263.3,203.2L266.4,204.2L263.5,204.3zM437.8,228.2L440.9,228.8L435.4,231.6zM434.8,224.5L438.6,224.4L435.8,226.7zM230.8,249.6L234.6,249.5L230.5,251.0zM577.7,328.0L585.2,328.9L579.8,331.5zM373.3,222.2L377.2,220.9L373.2,223.9zM405.1,234.1L408.9,235.4L404.1,237.8zM403.1,230.0L409.4,229.2L402.5,232.4zM341.2,367.2L345.0,365.8L342.6,369.3zM501.7,384.3L506.9,383.6L499.3,387.5zM352.6,218.5L357.6,217.2L353.5,220.4zM196.0,301.3L201.5,302.9L197.1,305.3zM442.2,386.3L444.4,385.4L441.1,387.8zM195.2,245.7L202.0,247.4L197.2,248.8zM637.5,305.8L640.4,304.9L639.2,307.5zM600.6,339.8L604.1,341.6L603.5,343.6zM530.0,213.8L535.0,213.3L532.5,217.2zM243.6,389.6L248.6,389.8L245.0,392.1zM514.4,293.7L516.3,292.4L514.6,294.8zM196.5,346.2L199.2,346.8L198.4,348.9zM293.6,237.5L296.3,237.4L292.9,239.8zM596.7,352.2L600.3,352.8L595.3,354.6zM374.6,267.9L377.1,267.6L374.3,268.9zM224.1,203.5L230.2,204.0L223.9,205.8z" fill="#5288d6" opacity="0.7"/>
<path clip-path="url(#mc)" d="M475.6,336.0L480.7,336.5L480.0,338.3zM460.6,329.3L463.1,327.7L462.6,332.1zM456.1,322.1L458.1,322.5L457.4,323.5zM224.1,291.7L229.8,292.9L223.1,294.4zM531.1,349.2L533.6,347.7L531.2,352.8zM355.0,245.3L359.7,246.5L356.4,246.8zM500.6,370.2L505.0,371.8L500.6,374.1zM625.5,259.2L629.7,260.2L628.2,261.9zM580.9,244.2L583.8,243.1L580.2,245.2zM575.7,285.3L579.9,283.5L574.5,287.8zM167.1,304.8L173.4,306.3L168.6,307.4zM489.3,337.0L493.5,336.3L488.8,338.7zM292.0,355.0L295.0,353.4L291.3,356.4zM241.0,349.1L244.0,348.4L240.9,351.8zM550.4,233.2L553.4,234.4L552.8,236.2zM252.1,273.9L256.3,271.8L255.3,278.4zM538.8,274.4L543.6,275.4L536.7,276.1zM321.5,249.6L326.5,250.9L323.3,253.1zM595.8,281.7L601.2,281.6L594.9,285.3zM178.3,303.2L182.1,301.6L178.8,304.4zM281.2,272.5L283.0,271.1L282.0,274.6zM551.0,227.8L557.1,225.9L551.2,232.6zM365.7,321.1L370.0,318.5L368.6,322.7zM260.1,276.5L264.9,275.2L263.5,278.1zM496.2,246.8L499.5,245.8L495.3,248.5zM465.3,205.4L470.7,203.0L465.0,210.0zM452.2,325.0L459.2,323.9L453.8,328.9zM381.1,377.1L385.7,376.1L379.4,378.2zM559.0,314.2L562.4,312.5L559.0,317.0zM298.5,226.7L306.3,228.1L302.8,231.5zM380.7,216.7L387.1,217.6L382.0,221.6zM314.1,296.2L316.5,297.2L315.8,297.8zM254.4,215.1L257.5,214.8L254.0,216.3zM224.0,326.4L227.5,324.5L222.5,329.1zM309.7,305.5L313.3,302.4L312.4,308.3zM219.1,293.8L222.6,295.0L219.2,295.5zM275.4,263.7L281.0,262.0L278.1,267.2zM532.8,378.0L538.6,375.7L535.8,379.5zM287.6,328.9L291.1,327.1L288.6,330.5zM166.6,245.0L168.4,245.1L165.8,245.9zM289.0,319.8L294.4,319.8L287.2,322.6zM441.2,294.6L447.4,294.5L444.2,299.9zM213.3,361.8L217.4,362.1L213.1,365.1zM545.4,282.8L548.4,281.2L545.1,286.5zM562.3,382.2L565.3,380.5L560.8,383.2zM336.0,214.3L338.7,213.3L335.6,216.2zM254.4,294.6L258.0,293.5L255.2,299.0zM255.3,314.3L258.4,314.0L253.9,315.4zM305.8,314.5L311.6,311.3L304.7,317.8zM366.7,343.8L370.4,343.4L367.7,346.7zM483.1,360.8L488.3,361.9L487.0,365.4zM162.8,331.4L166.1,330.5L161.9,333.7zM430.4,263.4L435.9,261.4L428.9,267.5zM420.5,298.2L424.6,297.3L419.3,300.5zM513.1,372.8L518.8,371.5L515.5,374.5zM517.8,264.9L523.7,262.7L516.0,267.8zM324.3,228.7L329.9,227.0L322.4,230.5zM380.5,387.4L382.4,386.7L380.1,388.7zM487.0,257.8L493.2,257.2L488.7,260.6zM433.0,257.5L435.0,257.8L432.7,260.0zM448.5,215.1L455.4,215.4L446.8,217.4zM331.8,268.7L336.0,267.0L330.7,272.4zM318.8,340.8L322.8,339.6L320.5,342.6zM211.7,339.3L214.8,339.3L213.4,340.3zM276.1,267.3L279.5,267.8L278.4,269.7zM319.1,292.3L323.2,290.7L320.7,295.7zM583.3,386.1L585.4,385.1L584.4,387.0zM217.8,292.6L220.6,293.3L219.0,293.8zM596.1,209.4L600.3,208.2L597.1,212.0zM330.5,212.2L335.3,210.6L333.9,214.3zM478.8,375.6L483.0,373.3L482.0,378.4zM375.7,290.9L382.1,292.2L377.7,293.8zM604.4,255.9L607.7,255.6L603.0,259.1zM603.5,225.3L606.4,224.2L605.4,228.0zM482.9,341.7L486.7,340.1L484.9,344.1zM192.7,348.8L199.0,346.4L191.7,352.6zM540.6,200.9L543.2,202.1L543.0,203.4zM340.3,370.3L343.7,371.3L339.2,372.4zM243.3,312.0L249.9,313.0L246.3,313.9zM487.1,268.7L491.6,268.5L485.9,272.2zM568.7,223.0L571.2,222.5L570.3,225.1zM470.8,366.3L475.8,365.1L472.7,369.1zM363.5,212.0L369.0,211.1L363.6,215.1zM601.6,337.3L604.8,338.3L599.1,341.8zM392.6,321.5L395.1,319.9L392.6,322.7zM545.3,207.2L547.4,205.8L544.7,209.3zM194.6,205.6L197.8,204.9L196.0,209.7zM364.0,264.0L365.9,263.9L363.4,264.9zM491.8,239.8L496.4,238.9L492.7,242.3zM192.6,274.3L195.9,273.9L191.5,275.3zM529.6,245.3L533.5,243.1L531.2,248.7zM501.6,226.2L504.0,224.3L500.6,227.5zM399.8,300.8L404.2,300.2L400.9,303.7zM590.8,308.4L594.4,308.8L590.2,310.1zM349.1,222.3L353.1,221.6L348.0,224.5zM623.8,237.3L628.2,238.0L626.8,241.0zM494.4,250.0L500.6,250.3L495.1,252.2zM232.6,377.0L238.0,378.1L230.7,380.7zM175.3,372.9L180.3,371.4L174.9,377.1zM552.1,322.4L555.7,323.0L551.3,323.8zM590.0,232.8L594.4,231.2L592.7,236.1zM381.5,308.2L383.4,306.6L380.9,309.5zM469.8,288.4L475.5,290.3L472.7,291.8zM265.3,283.0L269.3,281.5L264.2,284.1zM219.6,204.1L225.1,205.6L218.2,206.3zM460.5,324.5L465.0,322.4L462.6,327.3zM599.1,306.6L601.3,306.6L600.3,307.5zM599.2,370.8L604.7,370.1L597.6,373.5zM628.0,216.6L632.5,215.6L628.6,218.5zM617.7,388.8L624.3,387.3L616.0,393.7zM442.7,281.6L445.3,279.2L446.0,283.0zM161.7,208.0L166.6,205.8L161.4,211.5zM575.3,311.8L581.8,308.5L576.6,314.3zM258.0,338.2L260.6,337.7L260.3,340.4zM464.9,331.8L467.2,331.9L463.3,335.1zM272.0,311.3L275.9,313.0L271.7,314.7zM265.8,273.6L271.7,272.8L265.0,278.2zM322.5,279.3L327.7,279.3L320.8,283.8zM304.3,339.6L306.5,338.0L305.1,342.3zM604.7,354.0L608.7,355.6L608.3,357.5zM293.2,219.0L299.6,220.2L294.6,221.1zM245.5,277.2L250.7,275.7L246.8,280.7zM334.8,351.7L336.5,351.4L335.7,354.2zM170.3,286.7L174.1,285.8L170.9,288.0zM598.6,297.5L603.5,298.2L598.9,300.3zM202.5,369.5L206.8,367.5L203.3,371.3zM287.6,275.8L291.3,275.3L289.2,278.2zM623.7,359.0L628.6,360.8L623.7,361.2zM436.9,272.0L441.2,271.2L436.7,274.4zM351.8,368.5L357.7,368.4L355.2,372.5zM274.3,272.4L278.1,272.0L275.2,274.2zM593.1,210.3L597.7,207.5L591.6,213.8zM377.8,210.0L384.2,211.7L377.9,212.6zM603.1,325.4L606.8,325.8L603.4,327.7zM316.6,347.7L320.7,346.3L315.0,351.8zM295.3,297.4L299.5,297.6L297.2,300.6zM452.0,218.7L459.5,220.8L454.4,221.4zM486.7,293.9L491.7,295.8L488.8,296.4zM631.6,235.7L634.8,236.3L629.9,237.7zM586.2,381.2L591.0,382.4L586.2,383.6zM167.6,375.5L171.9,373.9L167.0,376.8zM289.9,207.8L294.0,206.8L289.2,209.0zM215.3,376.2L217.9,374.5L216.1,377.8zM629.4,222.5L631.6,221.4L630.9,224.9zM599.2,383.9L602.3,382.6L599.5,386.8zM222.6,332.2L224.9,332.0L223.7,334.8zM269.9,265.1L273.8,264.9L272.4,267.0zM318.7,379.5L323.7,378.3L316.6,382.9zM244.1,295.0L249.3,295.5L242.8,300.0zM537.9,328.7L541.1,327.0L539.0,332.4zM350.9,348.2L356.3,346.5L353.3,353.2zM468.6,329.5L471.5,330.6L471.3,330.7zM343.3,309.1L347.5,309.8L344.8,313.5zM414.1,315.2L419.0,316.4L416.0,318.0zM356.9,305.9L360.7,306.7L356.0,308.1zM271.7,324.4L276.3,323.8L274.6,329.0zM266.4,242.1L268.5,243.0L266.9,243.5zM183.7,211.2L188.2,210.9L184.9,213.5zM356.3,306.2L360.4,303.7L353.7,309.9zM341.2,226.0L346.7,223.1L340.5,228.0zM548.5,350.0L552.2,352.0L546.5,354.7zM618.9,275.2L622.7,274.5L620.2,277.4zM264.6,243.2L269.3,242.3L265.5,246.2zM474.9,216.7L478.5,216.2L473.4,217.9zM614.2,275.2L618.4,273.4L617.4,278.5zM196.0,367.5L201.5,367.2L195.4,369.7z" fill="#3d70c2" opacity="0.7"/>
<filter id="nz" x="0" y="0" width="100%" height="100%" filterUnits="objectBoundingBox"><feTurbulence type="turbulence" baseFrequency="0.18 0.42" numOctaves="2" seed="11"/><feColorMatrix type="matrix" values="0 0 0 0 0.23  0 0 0 0 0.43  0 0 0 0 0.82  1.0 0 0 0 -0.1"/></filter>
<g clip-path="url(#mc)"><rect transform="rotate(-19 400 300)" x="120" y="120" width="560" height="360" filter="url(#nz)"/></g>
<filter id="nz2" x="0" y="0" width="100%" height="100%" filterUnits="objectBoundingBox"><feTurbulence type="fractalNoise" baseFrequency="0.05 0.12" numOctaves="3" seed="4"/><feComponentTransfer><feFuncR type="table" tableValues="1 0 1 0 1 0 1 0 1 0 1 0 1"/></feComponentTransfer><feColorMatrix type="matrix" values="0 0 0 0 0.10  0 0 0 0 0.22  0 0 0 0 0.50  -1.4 0 0 0 0.55"/></filter>
<g clip-path="url(#mc)"><rect transform="rotate(-19 400 300)" x="120" y="120" width="560" height="360" filter="url(#nz2)"/></g>
<path clip-path="url(#mc)" d="M396.7,351.2l1.7,-2.0l2.1,1.2M345.0,383.5l2.6,-2.9l2.9,0.9l1.6,-3.2l2.4,1.4l1.6,-2.9M339.4,322.2l3.1,0.9l2.0,-3.2l1.9,1.1l2.3,-3.5M215.5,240.0l2.4,1.6l1.9,-1.9M527.7,219.1l2.3,-3.3l2.3,0.9l1.8,-2.5l1.6,1.0l3.0,-3.0M574.3,228.7l2.3,0.7l1.9,-3.3l2.7,1.2l2.5,-3.3l3.1,1.2M184.2,365.6l2.6,-3.0l3.1,1.8l1.7,-1.7M260.5,349.5l2.0,2.1l1.6,-2.2l2.3,0.9l1.9,-2.0M534.2,366.0l1.9,-3.3l1.9,2.0M240.2,259.7l2.8,0.6l2.0,-3.4l1.5,1.7l1.7,-2.9M363.3,375.8l1.9,-1.8l1.6,0.8l2.2,-3.4M330.3,336.2l2.4,-2.1l2.5,1.2M317.2,357.8l2.2,-2.4l1.9,1.6M426.9,208.9l1.7,2.0l2.8,-2.8l3.2,1.2l1.7,-2.1M222.2,316.0l1.6,-2.0l2.5,0.8M600.2,217.8l2.5,-2.9l1.5,1.7l2.5,-3.2l2.4,0.7M266.8,324.1l2.0,-3.0l2.1,1.2M388.7,206.2l2.5,-3.3l2.1,1.3l2.5,-3.5M466.5,234.4l1.5,1.0l3.0,-2.5l2.4,1.3l3.0,-3.6M204.5,221.7l2.4,-2.3l2.8,1.2l2.1,-2.2M561.7,371.4l2.0,-2.7l2.6,0.5l3.0,-2.6l2.5,0.9M303.1,271.8l2.7,-2.9l1.7,1.0l1.9,-1.8M467.2,308.8l2.3,1.3l2.0,-2.5l3.1,1.1l1.5,-2.2l1.8,1.6M404.4,290.4l1.6,-1.7l2.7,1.3l2.6,-2.8M177.2,285.8l1.6,-1.9l3.0,1.2M239.0,334.3l2.3,1.8l2.1,-2.1M575.5,333.9l1.6,-2.6l3.1,1.3M580.5,220.0l2.8,-3.5l3.0,1.4l3.0,-3.5l1.9,0.9M210.6,349.4l2.3,0.6l2.7,-2.3l3.2,1.1l3.0,-2.9l2.1,1.6M500.7,287.4l2.0,1.5l1.8,-2.2l2.1,1.2l2.8,-2.8M188.5,366.3l1.6,-2.5l3.0,1.6l1.6,-2.8l2.6,1.2M479.1,299.1l2.7,-2.2l2.0,2.0l2.5,-2.8M500.8,293.6l2.6,-2.6l1.9,1.4l1.6,-2.3l2.3,0.9l2.2,-2.1M236.0,387.0l2.9,1.2l2.8,-3.4l1.9,1.3l2.1,-2.0M580.3,330.3l2.4,1.9l1.6,-2.3l2.7,1.3l2.3,-2.3l1.9,1.7M323.7,378.1l2.5,0.8l1.7,-2.2l2.4,0.7l2.3,-2.3M618.1,362.4l1.6,-3.2l2.6,1.0M364.1,315.6l1.9,1.9l2.4,-3.1l2.5,1.2l1.8,-2.9M400.2,389.4l2.5,-2.3l2.0,1.4M408.8,224.8l3.1,-3.3l2.4,1.8l2.9,-3.1l2.6,0.7M322.4,261.8l2.3,1.4l1.6,-2.4l2.7,1.3M244.1,388.6l2.4,-2.9l2.2,1.3l3.1,-2.6l2.4,1.2M227.7,227.8l2.2,0.6l3.1,-2.3M584.5,208.6l2.4,0.7l2.3,-3.0l2.1,1.9M569.7,211.6l2.8,-3.5l1.8,1.2l2.1,-3.2M247.1,378.3l2.0,-2.7l2.0,1.7l2.2,-3.0l2.0,1.3l2.4,-3.1M473.2,281.5l1.7,0.9l1.8,-2.0M477.8,264.8l2.9,-2.8l2.7,1.6l2.8,-2.2M195.1,293.7l2.9,-2.8l3.1,0.5l1.6,-2.3l1.6,2.2l2.0,-3.4M635.6,204.0l2.7,-2.8l3.1,1.8l3.0,-3.6M562.3,204.7l3.2,-3.5l2.5,1.4l2.2,-2.6M230.0,304.1l1.7,-3.1l2.5,1.9l2.0,-2.7l2.0,1.9M260.3,323.1l1.6,-2.5l2.4,1.8l1.8,-2.1l2.0,1.9M271.4,320.5l3.2,-3.0l2.1,1.4M313.6,386.3l2.7,1.3l2.2,-3.0M580.6,208.5l3.1,0.4l2.6,-2.9l1.7,2.1M634.8,296.0l2.9,-2.4l3.1,0.4l2.5,-2.6l1.8,1.3l2.8,-3.4M631.4,240.7l1.9,-2.4l1.6,1.6l1.9,-2.9l1.8,1.8l2.5,-3.1M616.2,256.1l2.1,1.4l2.5,-2.8M274.4,293.8l3.1,-2.7l2.9,1.4M563.1,352.4l2.0,1.3l2.9,-3.1l1.9,2.2l1.9,-2.7l2.4,0.7M177.7,312.1l2.1,-3.1l3.1,1.5M172.4,268.4l2.3,1.2l2.7,-2.2M492.3,376.4l2.1,0.7l1.7,-2.6M582.4,364.6l2.8,1.7l2.3,-3.3l1.8,1.2M406.8,338.1l2.0,2.0l2.2,-2.5l1.9,1.4l2.7,-2.6l2.6,1.2M165.7,382.8l3.1,0.6l1.6,-2.0l1.8,2.0l2.4,-2.0M290.4,297.1l1.8,2.3l2.4,-3.3l1.7,1.8M164.9,313.8l2.4,1.9l1.8,-3.0l2.4,1.1l1.6,-2.9l1.8,1.5M178.2,386.0l1.6,2.0l1.9,-1.9M500.0,228.9l1.5,-2.8l2.7,1.4l3.1,-3.0l2.9,0.5l1.6,-2.8M187.2,236.8l2.7,-2.3l2.0,1.4l1.7,-2.4l1.7,1.9M405.4,213.8l3.0,-3.0l2.4,0.8l2.0,-2.2l1.8,1.6l2.1,-3.0M435.1,357.2l2.9,1.1l2.6,-2.4M494.1,277.2l1.9,-3.1l2.9,0.6l2.9,-2.5l1.6,0.7M406.9,306.1l1.9,-2.7l1.9,0.9M271.2,370.0l2.8,-2.5l2.4,0.5l3.1,-3.1l1.7,1.5M397.7,327.4l1.6,2.0l3.0,-2.6l2.7,1.8l3.0,-2.2M561.7,247.2l2.2,2.1l3.1,-3.7l2.1,0.9M412.6,383.9l3.1,-2.9l1.8,1.2l2.0,-1.9l2.6,0.7l2.4,-3.4M302.1,283.0l1.6,1.2l2.3,-2.1l2.0,1.6l2.2,-2.1M407.3,282.6l2.7,0.6l1.5,-2.1l1.7,2.0l1.9,-3.3l2.7,0.7M501.2,260.4l2.8,-3.0l2.7,0.9M221.3,261.8l1.7,-2.1l2.3,0.5l1.6,-2.4l1.7,2.1l1.7,-2.9M541.4,259.9l2.4,1.5l2.0,-3.4M475.3,362.1l2.7,-3.5l2.5,2.0M570.3,254.8l2.6,0.5l2.3,-2.3l2.5,1.1l2.3,-2.7M442.4,369.2l2.0,0.9l1.7,-3.1l3.1,0.5l2.1,-3.3M574.7,385.9l2.3,1.8l1.9,-3.3l2.5,1.8l2.5,-3.2M555.0,296.6l1.7,-1.9l2.9,1.7M180.5,352.8l1.7,1.3l2.3,-2.1l2.1,0.8M549.1,333.6l2.6,0.7l2.6,-3.1M271.1,290.5l3.0,1.3l2.7,-3.0l1.6,2.1M534.1,297.8l2.0,1.4l1.9,-1.8l2.4,1.9l2.7,-2.4l2.4,1.4M438.1,287.4l2.4,-3.2l2.7,0.6l1.9,-2.3l2.1,1.4l2.0,-3.4M512.4,270.5l2.8,-2.5l2.9,1.2l1.7,-3.1l2.7,1.2M448.2,283.3l2.8,1.0l2.2,-2.7l2.1,2.0l1.7,-1.8M312.0,373.7l1.7,1.7l2.2,-2.3l2.7,0.9l1.5,-3.0l2.8,1.8M301.0,250.1l1.5,-3.1l1.5,1.1l1.6,-3.1l2.6,1.6l2.6,-3.0M529.9,243.3l1.9,-1.9l2.9,1.5l1.9,-3.1M178.3,388.3l1.8,0.8l2.6,-2.1M458.3,257.4l2.9,0.9l1.6,-1.8M507.1,296.3l2.0,0.9l2.9,-3.2l1.8,1.8M178.6,288.6l2.8,-3.2l2.7,0.7l1.6,-2.7l2.7,0.4M562.4,370.5l2.6,-3.5l2.6,1.2l2.8,-2.8l1.6,1.6M358.7,263.7l1.9,-2.3l2.8,1.8l2.3,-3.2l1.7,1.5l2.8,-3.3M345.9,231.9l2.1,-2.0l2.5,1.1l3.0,-3.2l2.8,1.3l2.8,-2.2M638.2,310.3l3.1,-2.5l2.8,1.6l2.5,-3.4M639.8,257.8l2.0,-1.9l3.1,0.8l3.0,-2.6l2.7,0.5l2.9,-3.5M444.1,372.4l2.9,-2.3l3.0,0.5l2.1,-3.4l1.8,1.3M513.1,349.0l1.6,0.9l3.1,-2.4M636.0,309.1l1.6,-1.8l2.7,1.1l1.7,-2.5l2.1,2.2M183.0,234.2l2.8,-2.2l2.4,1.0M629.1,334.3l2.7,0.9l2.4,-2.0l2.2,1.9l1.7,-1.9l2.9,1.3M294.3,275.5l1.6,1.9l1.9,-2.1M432.2,382.8l3.1,0.5l3.0,-3.7l1.7,1.3l3.1,-3.7M192.3,315.0l1.8,-2.8l2.1,1.1M164.8,202.3l1.8,1.6l3.1,-2.5l2.9,1.9l2.6,-2.7l2.2,1.3M219.9,214.2l3.1,-2.9l2.4,1.2l2.7,-3.3l3.0,1.7M396.5,200.9l2.9,-2.1l2.6,1.0l2.2,-2.7l3.2,1.8M331.5,381.9l1.8,1.9l2.3,-3.1l3.1,1.3M493.6,304.3l2.6,0.6l3.1,-3.6l2.7,1.8M333.8,355.9l2.5,-2.3l2.1,1.9l2.4,-3.2l1.7,1.9M319.8,332.8l2.1,2.2l2.1,-3.2l2.9,1.6l2.3,-2.7l2.9,0.5M267.9,202.5l2.3,-3.4l3.1,0.9l2.3,-2.1l2.8,1.2l1.8,-3.1M180.4,236.6l3.2,0.5l2.0,-3.1l2.1,2.1l1.5,-2.0l2.0,1.9M209.1,328.0l2.8,-2.7l1.8,1.4l2.2,-3.2M439.9,217.9l2.7,-3.5l2.9,0.4l1.8,-2.4M494.0,385.7l2.5,1.3l2.8,-2.9l2.0,1.7l3.1,-2.2M393.4,226.5l1.5,0.8l1.9,-2.1l3.1,1.1M639.4,375.2l2.0,-2.3l2.4,1.6l1.6,-2.8l2.4,0.9M189.0,267.9l2.5,-2.4l2.3,0.5l1.7,-2.4M323.5,268.0l2.3,1.2l2.1,-3.1l3.0,0.8l2.7,-2.4l1.5,1.8M532.6,262.7l2.6,1.6l3.1,-2.9M222.5,385.9l2.4,-2.4l1.6,1.7l2.7,-3.1l2.2,1.9l1.5,-1.9M168.8,305.3l3.1,-2.9l2.3,1.3l2.5,-3.2M352.0,305.2l2.9,-3.1l3.1,1.4l3.1,-2.3l2.9,0.8M602.0,350.4l2.4,-3.2l1.6,1.6l2.5,-3.1l2.1,1.5l2.8,-2.6M487.2,371.7l2.4,-2.7l2.9,0.8l2.0,-2.4l2.6,0.7M629.7,295.6l3.1,0.7l2.6,-3.3l2.0,0.9M581.6,260.3l2.7,-3.5l1.8,1.0M225.3,374.5l2.4,1.7l2.6,-2.1l2.6,1.2l2.8,-3.5M328.8,361.5l2.6,0.4l2.9,-2.8l2.3,1.3M338.8,243.7l1.6,1.2l3.1,-2.6l2.0,1.5M338.9,380.1l2.1,-2.4l2.4,1.8l2.5,-2.8l3.2,1.3l1.5,-2.4M392.1,227.0l2.3,1.6l2.7,-2.1l2.7,1.9M386.5,228.8l1.7,0.9l3.0,-3.2M526.0,212.8l1.7,-2.2l3.2,0.8l2.0,-1.9l2.7,0.9M441.9,242.3l2.8,0.7l2.7,-3.0l2.3,1.8l1.8,-3.1l1.9,0.8M286.3,336.8l2.7,1.7l3.1,-3.6l2.4,1.1l1.5,-2.5M330.5,200.1l2.3,1.0l2.7,-3.3M164.2,350.9l2.9,0.6l2.5,-3.0l2.8,0.6l2.2,-2.4M433.5,329.1l2.5,0.8l2.7,-3.3l1.5,1.9l2.8,-2.2l3.1,1.6M588.7,308.4l3.1,-3.4l1.9,1.2l2.2,-1.9l2.3,1.5M253.5,303.5l2.5,-2.7l3.2,1.5l2.9,-2.7M393.5,245.2l2.8,-2.7l2.5,1.3l2.8,-2.5M485.4,270.2l2.0,-1.8l3.0,1.1l2.6,-3.3l3.0,0.9l3.2,-2.8M508.8,358.0l2.0,2.1l1.8,-2.1l2.6,0.7l1.6,-3.0M404.0,305.6l3.0,1.5l2.8,-2.2l2.4,1.3M511.4,324.7l2.7,0.8l1.6,-1.8M506.0,314.3l2.8,-2.6l1.6,2.1l2.4,-2.9l2.7,1.3M595.4,201.7l2.1,0.9l2.2,-2.1l2.9,0.6l3.2,-3.4l2.9,1.1M262.7,237.1l2.9,-2.5l2.0,2.0M489.9,285.9l1.6,1.2l2.8,-2.9M299.8,280.6l1.7,-1.8l2.6,0.5l3.1,-3.2l1.8,1.3l1.6,-1.8M328.9,366.7l2.4,1.5l2.3,-2.5l2.9,0.8l2.2,-2.9l3.1,0.8M367.9,276.4l2.1,-3.1l1.8,1.4l2.0,-2.7M531.2,222.0l1.9,-2.8l2.9,1.1l2.5,-3.4l3.1,1.6l3.1,-2.6M607.0,337.1l1.7,1.3l1.8,-3.1l2.0,1.4l1.6,-2.8l2.4,1.8M506.3,341.4l1.9,1.6l1.6,-3.2l2.7,1.2l2.1,-2.0M426.1,346.9l3.1,-3.7l2.8,1.1M631.9,219.3l2.4,-2.9l2.3,1.8l2.7,-3.3l1.9,1.4M420.9,310.9l2.9,-2.8l1.8,2.0M427.1,340.7l1.6,-3.2l2.7,1.0l2.8,-2.2M571.0,385.5l2.1,1.4l3.0,-3.3l2.1,1.9l1.5,-3.0M617.0,389.8l2.7,-3.4l2.1,0.7l3.1,-2.3M472.0,343.7l2.5,-2.8l1.7,1.2l3.0,-2.1l2.3,0.7l1.6,-1.8M282.6,297.6l1.9,1.7l1.9,-1.9l2.4,1.7M296.1,344.0l3.1,1.1l2.5,-3.0l2.0,1.7M224.0,210.2l1.7,1.2l2.0,-2.0l3.1,1.1l1.7,-2.4M596.9,360.7l1.8,-1.9l1.6,1.6l1.7,-3.1l2.2,2.1l2.7,-2.7M247.6,281.0l1.6,2.3l2.0,-1.9l2.6,1.9l1.8,-3.2M293.5,300.4l1.8,1.7l2.0,-3.3M293.9,292.3l2.0,-3.2l2.7,1.3l3.1,-3.5l2.8,1.2l1.6,-2.0M472.4,222.2l2.2,-3.2l2.9,1.5l2.3,-2.7l3.2,1.7M451.7,215.0l2.7,-2.6l2.8,1.1M213.5,226.6l2.7,1.3l2.2,-2.9l2.4,1.1l1.7,-1.8M475.2,381.0l2.1,-1.9l2.2,1.7l1.8,-2.6l1.8,1.9l2.4,-2.5M525.1,317.8l2.9,-2.7l3.0,1.3l2.4,-3.4l3.2,1.7l2.6,-3.2M502.3,276.5l2.2,-3.3l2.2,1.1l2.8,-2.3l1.9,1.2l3.2,-3.0M253.5,261.1l2.7,-2.8l2.2,1.8M452.6,344.2l1.8,1.5l2.0,-1.8l1.6,1.4l2.1,-2.4M205.1,374.6l1.7,-3.3l3.1,1.4l2.1,-2.8l1.7,2.2M632.5,365.8l2.2,1.5l2.3,-3.3l2.8,1.8l2.7,-2.3l2.5,0.5M512.2,228.5l2.6,1.8l1.6,-2.9l2.6,1.5l1.9,-2.3M285.7,373.1l1.9,-2.6l1.7,0.9l2.0,-1.9M433.5,317.8l2.3,-3.4l2.8,1.2l2.1,-2.0l1.8,1.2l2.3,-3.3M199.2,307.5l2.1,1.3l2.1,-3.1l3.1,1.1M308.6,248.0l2.2,-2.5l2.2,1.7M372.5,335.6l2.1,-2.3l1.7,0.8M198.6,355.4l1.9,2.2l1.8,-2.6l1.9,2.1M531.5,288.8l2.5,0.7l2.6,-2.7l2.7,1.6M286.3,334.5l1.8,-3.2l1.6,2.1l2.3,-1.9M217.3,333.9l2.0,-2.2l2.9,1.9l1.8,-3.0M256.9,341.7l1.8,2.1l2.5,-3.2M346.9,261.5l1.8,1.2l2.7,-3.5l2.3,1.8M212.6,321.5l2.7,0.9l1.8,-2.2l2.7,1.5l3.1,-2.8M191.4,353.6l2.3,1.2l1.6,-2.0l2.8,1.1l3.0,-3.4M416.2,386.8l2.2,1.4l1.6,-3.1M231.9,310.3l2.8,1.7l2.2,-2.6l2.9,1.5l1.5,-2.3M611.2,201.9l2.8,1.8l2.1,-2.0M204.6,355.2l2.3,-3.3l2.8,1.1l1.6,-2.3l2.9,1.0M347.6,321.4l2.7,-2.2l2.2,1.9M285.9,300.7l2.2,1.1l3.1,-3.2l3.2,0.8l2.3,-2.5M576.1,269.8l2.4,0.9l3.1,-2.7l3.1,1.2M323.7,304.7l2.5,-2.9l1.7,2.0l2.6,-3.0M305.9,345.0l3.2,1.5l2.7,-3.3l2.7,1.0l3.1,-3.6M482.2,282.6l2.1,-2.2l2.1,1.6l2.2,-2.1l2.3,2.1M367.6,317.3l2.2,0.7l1.5,-3.0l2.3,1.2l1.6,-1.8M160.3,370.2l2.0,1.3l2.5,-2.3M470.0,321.5l3.2,-3.3l2.2,0.9l2.9,-3.2l2.0,2.2l2.3,-2.2M522.8,326.7l2.6,1.4l2.2,-3.2M416.1,266.9l2.5,1.9l1.6,-2.4l1.6,1.0l2.2,-2.6l2.9,1.1M552.6,281.4l2.9,-2.4l3.0,0.4l2.0,-2.8M401.9,206.8l3.0,-3.0l1.8,0.8l1.9,-3.1l2.9,0.5M211.5,355.8l2.7,0.7l2.0,-3.0l2.2,0.8l1.7,-2.8M493.6,344.6l1.9,-2.0l2.6,0.7M288.2,281.5l2.6,1.7l2.4,-2.4M189.4,333.7l2.1,2.1l1.6,-2.9M629.9,336.4l2.4,1.5l1.8,-3.0l3.1,0.7l2.2,-3.3M259.8,279.8l2.7,0.8l2.2,-2.6l1.9,1.9M611.6,375.7l1.5,1.4l2.8,-2.9l3.1,1.8M487.7,249.6l1.6,-2.3l2.8,0.9l1.8,-2.6l3.0,1.3l1.7,-2.4M270.0,354.3l2.8,0.6l3.1,-3.7l1.7,1.5l1.6,-2.9l1.7,1.3M320.3,336.9l1.8,1.2l2.3,-3.0l2.3,1.3l3.1,-2.5l1.5,1.6M432.1,301.6l3.1,1.6l2.2,-2.4l2.2,1.8l2.3,-3.0l3.2,1.4M406.5,341.0l2.2,-3.4l3.2,1.2l2.4,-2.1l2.5,1.9l1.9,-3.0M282.2,335.6l2.5,1.7l1.6,-3.0l2.4,0.9l2.0,-2.7M515.7,233.8l1.9,-2.8l2.2,1.8M509.0,269.9l2.2,-2.2l2.0,1.8l1.9,-1.8M425.7,230.1l1.9,-2.1l3.0,0.5l3.0,-3.0l2.6,1.6l2.8,-2.6M211.3,243.7l1.8,1.0l2.3,-2.1l1.9,1.8l1.5,-2.6M355.8,334.9l2.3,0.8l1.5,-3.0l2.1,1.0l3.1,-2.7M419.7,226.7l2.9,1.8l1.9,-1.9l1.7,1.7l2.4,-2.5l2.7,0.7M451.8,279.3l1.8,-3.0l2.8,1.1l2.3,-2.2M226.9,332.3l2.5,-2.5l2.0,0.9l2.8,-2.7l1.8,2.1M234.0,243.5l2.8,0.4l3.1,-3.2l2.9,1.0M369.7,217.8l2.0,-3.2l2.9,1.8l1.7,-2.4l2.9,0.8M277.5,203.9l2.2,-3.1l1.9,0.7M385.5,263.5l2.5,0.9l1.7,-2.8l2.5,0.9M278.7,337.5l2.5,1.5l3.1,-3.7M179.2,329.4l3.2,-2.8l2.9,1.5M398.0,372.8l2.5,1.7l1.7,-3.1l3.1,1.2l2.9,-3.0M368.6,230.5l2.7,-3.3l3.0,1.1l3.1,-2.7l1.5,1.4l2.4,-3.2M272.0,204.8l2.5,-2.2l2.4,1.7l1.9,-3.3M187.1,228.2l3.1,-2.4l1.6,1.6l2.1,-2.5l2.2,2.0l2.0,-2.9M432.4,254.0l2.3,0.6l2.3,-3.3l1.5,1.8l1.7,-2.5l2.7,0.5M515.5,221.5l3.0,0.4l1.9,-2.4l2.9,0.8l3.1,-2.3M594.6,210.8l2.1,2.1l3.0,-2.5l2.8,1.8l1.9,-2.4l2.8,1.3M600.5,282.4l1.8,1.1l3.0,-2.5l3.0,1.6l2.5,-2.4l1.5,0.9M557.5,382.1l2.5,1.9l2.4,-3.0M300.2,343.5l2.7,0.9l1.7,-2.8l3.1,0.9l3.1,-3.6M570.0,303.1l1.8,-2.4l1.8,1.2M167.2,289.8l3.2,1.6l3.1,-3.7l2.1,1.4l2.2,-3.1l1.8,1.0M376.5,303.4l1.5,1.4l3.0,-2.3l2.4,1.4l2.9,-2.6M451.5,381.0l2.9,0.9l2.1,-2.5l1.8,0.8l2.2,-2.5l2.4,0.6M179.2,262.5l1.6,1.6l2.8,-2.8l3.2,1.2l1.5,-2.4M476.9,323.8l1.8,-2.1l1.7,1.2l1.6,-2.3l2.5,0.6M522.8,285.8l3.1,0.8l2.6,-3.4M532.2,226.4l3.0,0.9l2.6,-2.7l2.8,1.4l2.2,-3.2l2.0,1.1M493.9,247.4l2.8,0.7l2.1,-2.7l2.6,0.7l1.8,-2.1l2.1,1.9M358.4,305.9l2.7,-3.3l2.5,1.7l2.5,-2.9M296.9,204.7l2.2,1.1l2.6,-2.7l3.1,1.1l2.5,-3.0M391.5,293.5l2.1,1.6l2.9,-2.4l3.1,0.7M469.7,376.2l1.7,2.0l2.5,-2.1l3.2,1.5M528.0,345.4l1.8,-1.8l2.4,0.5M194.3,379.4l2.9,-3.0l2.1,1.5l2.7,-2.5M412.5,331.3l1.6,1.1l2.7,-3.2l2.2,2.0l2.2,-1.9l1.8,2.1M498.7,216.5l3.0,0.8l1.6,-1.9l2.1,0.9l1.9,-2.8M565.9,345.1l2.0,-2.7l2.2,0.9M192.5,364.5l2.3,1.9l1.7,-2.7l1.9,2.1l2.9,-3.6M343.8,296.4l2.1,2.1l3.1,-3.7l3.0,1.1l2.6,-3.4M366.8,374.6l3.1,1.9l1.9,-3.0l1.6,1.8l2.0,-2.6M313.3,232.6l2.4,0.7l1.9,-2.3l2.1,1.6l1.9,-2.2l3.0,1.6M607.5,348.0l2.3,-3.2l2.9,0.7l2.3,-2.8M165.3,246.3l2.5,1.3l2.1,-2.0l2.8,1.6l2.2,-3.1l2.9,1.4M547.9,383.6l3.1,-2.9l2.8,1.5M207.3,311.4l2.1,1.2l2.0,-3.1M467.6,256.7l2.8,-3.0l3.2,1.4l2.3,-2.8M432.1,254.2l3.1,-3.2l2.4,1.1l2.7,-3.0l3.1,1.5M344.2,252.9l2.2,1.2l1.6,-2.5M591.2,252.7l2.5,0.8l2.6,-2.9l3.1,1.1l2.1,-3.3M459.8,264.9l1.7,-3.0l3.1,1.3l3.2,-3.2l3.0,1.5l2.2,-3.2M473.1,310.8l2.0,-2.1l1.9,1.6l2.7,-2.4l2.2,1.5l2.6,-2.7M322.9,366.9l2.6,-2.7l1.9,1.5l3.2,-2.3M424.5,295.6l2.8,-2.7l2.2,0.7l1.9,-2.8l2.9,0.6M628.6,373.7l2.4,1.6l2.1,-2.4l2.7,1.2l2.2,-2.8M215.8,289.4l1.6,-2.8l2.4,2.1l2.3,-2.9l2.8,1.9M268.6,336.7l2.2,1.1l1.9,-3.0l3.0,0.8l2.5,-2.7l1.7,1.9M415.3,388.2l2.1,1.1l1.6,-3.0l2.4,1.1l2.0,-2.6l1.7,1.2M261.1,341.4l2.7,-2.6l2.3,1.0l1.9,-2.3M290.9,235.9l2.6,0.5l3.1,-3.1l3.1,1.1l2.6,-2.7M454.2,229.1l2.1,-3.0l2.4,2.0M539.5,358.9l2.1,1.5l3.0,-2.3l1.7,2.3l2.6,-3.6M370.0,281.9l2.5,-3.5l2.2,1.7M272.1,381.1l2.0,1.6l2.6,-2.7l2.0,1.5M477.5,363.2l3.2,-3.0l2.6,0.9l1.8,-2.1l3.0,1.2l2.0,-2.3M552.0,261.5l1.7,1.7l1.5,-3.1l1.9,1.5M250.5,284.5l2.8,-3.4l3.2,1.0l2.4,-2.5l2.0,1.4M627.1,210.6l1.7,1.4l2.7,-2.1l3.2,0.6l2.6,-3.3l1.6,1.1M581.8,376.6l2.5,-3.1l2.1,1.9M451.6,281.0l3.0,-3.7l2.0,1.7l2.5,-3.1M243.6,244.1l2.8,-2.2l2.5,0.9M238.2,381.0l1.6,1.3l1.9,-2.7l2.2,2.0l1.9,-2.2M600.3,337.0l1.6,1.9l2.3,-2.3l1.9,1.2l1.6,-1.9l2.1,0.8M323.7,324.4l1.7,1.4l1.9,-2.1l3.1,0.6l2.2,-2.9M457.4,240.9l2.1,1.0l2.4,-3.4l1.7,1.1M391.9,387.1l2.6,-2.2l1.9,0.9M399.9,388.8l2.1,2.0l2.6,-3.5M198.3,349.6l2.0,-2.7l3.1,1.7l2.3,-2.4M388.0,237.9l2.1,-2.6l2.9,0.7l2.1,-3.2l2.6,1.2l1.5,-2.9M359.2,245.2l1.7,-3.1l2.9,1.9l2.6,-2.3l2.2,2.1l1.5,-2.2M231.6,232.4l1.6,2.1l2.2,-2.1l1.7,1.5l2.1,-2.6M211.8,267.5l1.5,-2.3l2.1,1.7l2.5,-2.8M200.1,374.8l1.8,1.1l1.7,-3.1l1.7,1.8l2.9,-2.8M439.6,263.3l1.6,-2.8l3.0,0.8l2.8,-2.9l2.6,1.7M203.6,211.3l2.8,1.4l3.1,-3.7l2.8,1.7l1.7,-2.1M501.2,310.3l1.5,-2.5l2.4,1.3l2.8,-3.3l3.2,0.5M238.8,317.6l3.0,-3.1l2.6,1.8M518.1,320.6l1.7,-2.6l3.1,0.3M621.9,244.0l1.7,1.0l1.9,-2.9l1.9,2.0l2.2,-2.2M359.4,226.6l1.7,1.4l3.0,-3.0M510.3,252.3l3.0,-3.2l2.5,1.3M503.8,314.3l2.8,-2.7l2.9,0.8l2.2,-2.8M625.5,246.1l2.0,-2.9l3.0,1.7l2.7,-3.3l2.6,1.3l1.8,-2.6M628.9,379.8l2.0,1.0l2.9,-2.4M527.5,237.3l1.7,1.6l2.0,-3.0l1.6,1.8l1.9,-3.3M317.9,327.2l3.1,-3.1l3.1,1.5M188.9,341.3l1.5,-3.1l1.5,1.0l3.0,-2.8l3.0,0.8l3.1,-2.4M428.3,231.2l2.1,1.6l1.8,-2.5l2.1,1.9l2.4,-2.8M446.4,248.2l2.8,0.4l2.5,-3.4l3.2,1.4M504.9,264.8l2.2,-2.5l2.7,1.1l2.3,-2.1l3.0,0.4l3.1,-3.0M319.5,386.6l2.7,-2.7l2.3,2.0M474.4,224.5l1.6,2.3l2.4,-2.2l3.2,1.0M233.6,368.9l2.8,0.7l1.5,-1.9M535.8,314.9l2.7,-3.5l2.5,1.4M440.1,363.0l3.0,-3.3l2.7,1.3M597.9,328.1l2.2,-2.4l1.5,1.7l2.5,-3.2l2.8,0.6M216.4,222.6l2.9,1.3l2.4,-2.2M273.4,216.3l2.5,2.0l2.2,-2.4M552.4,320.5l3.0,-2.1l2.3,1.0l2.9,-3.1l2.3,1.4M331.7,343.5l1.5,-3.0l2.1,1.1M496.3,300.8l1.8,-1.9l2.7,1.8l1.6,-2.0l2.4,0.9M394.8,295.3l2.7,-2.3l3.2,1.1l2.4,-3.4l2.7,0.4M296.2,296.3l3.0,1.1l2.4,-2.4l2.5,1.8l1.9,-2.6M379.7,283.8l2.7,-2.6l2.0,1.2l3.1,-2.4M478.8,223.6l2.8,-3.4l3.2,1.0l2.2,-3.2l2.2,0.9l2.3,-2.4M283.6,346.8l2.6,-2.5l1.7,1.9l2.8,-3.2l2.5,0.7M400.7,358.3l1.6,2.1l1.5,-2.1l2.2,1.7M494.5,364.7l2.1,1.6l2.2,-2.0M166.6,359.7l1.8,1.2l2.0,-2.1l3.1,1.4M291.0,261.9l2.5,0.9l3.0,-2.8l1.8,2.1l3.1,-3.6M583.9,304.0l1.8,-3.2l2.4,1.2M285.4,271.6l2.9,0.5l2.5,-2.4l1.9,1.1l2.2,-2.9l2.2,1.9M234.4,362.5l2.7,0.6l2.7,-2.9l3.1,0.4l2.2,-2.2l2.6,0.5M573.7,290.0l2.2,-2.5l3.1,0.6l1.8,-2.0l2.0,1.3M343.9,287.4l2.0,0.8l2.3,-3.0M370.5,377.4l2.5,2.0l2.7,-2.6l2.8,0.8l2.3,-3.0l1.9,1.9M451.2,230.9l2.3,-3.1l2.9,1.6M585.9,251.7l2.8,-2.2l1.7,1.5l2.5,-2.1l3.0,1.6l3.1,-3.7M313.9,324.0l2.7,1.0l1.6,-1.9M540.3,325.8l1.8,-2.8l3.1,0.7l3.2,-3.0l1.9,0.9M501.6,376.3l2.4,-2.9l1.9,2.1l1.6,-2.4M234.5,291.0l1.9,1.2l2.0,-2.6l1.9,1.1l2.0,-2.1l2.8,1.5M542.7,303.2l2.1,-2.1l2.4,1.1l2.2,-3.4l1.8,0.8M390.9,343.0l2.0,1.0l1.8,-2.3l2.7,0.8l1.8,-2.7M280.3,244.4l1.9,1.0l3.0,-2.5M447.2,377.9l2.2,2.1l3.0,-3.6l2.7,0.7l1.6,-1.7l3.1,1.1M584.0,381.9l2.0,0.9l2.0,-3.4l3.1,0.8M391.4,356.5l2.8,1.6l2.4,-2.2l2.3,1.7l2.7,-2.4l1.9,1.2M339.3,257.4l2.2,1.4l2.9,-3.5l3.2,0.8l2.6,-2.9l2.9,0.7M384.1,248.7l1.9,-3.0l2.9,0.7l3.1,-2.5l2.1,1.2M194.9,284.3l1.9,1.9l2.1,-3.0l2.4,0.8l2.0,-2.9M574.3,374.3l2.0,0.8l1.5,-3.2l3.1,1.1M433.3,388.6l1.6,2.0l3.2,-3.2l2.6,1.8M639.9,271.9l2.8,-2.1l2.6,1.9l2.6,-2.1l1.6,2.0M248.9,280.2l3.0,0.9l2.6,-3.2l2.5,1.3l2.4,-3.1M243.9,318.7l2.6,-2.3l1.7,1.2l3.1,-2.6l2.0,2.1M631.3,343.9l2.9,-2.2l1.5,0.8l2.1,-2.2l3.0,1.0M568.6,292.7l2.1,-1.9l2.3,2.0l3.2,-3.6l1.7,1.4M560.3,229.3l3.1,-3.0l1.9,1.5M567.4,257.2l1.8,-3.1l1.8,1.4l2.4,-2.9M388.6,335.0l1.7,1.5l2.4,-3.3l1.5,1.3M194.6,305.0l2.3,2.0l2.9,-3.3l2.4,1.7M318.9,388.5l2.7,0.4l2.1,-2.8M410.4,220.5l2.4,2.1l1.5,-2.3l1.8,0.9M442.6,380.0l2.4,1.6l3.0,-3.6l2.1,0.9l3.1,-3.1l3.0,0.5M538.8,222.5l1.7,-2.3l2.2,1.6l3.1,-2.8M437.7,278.1l1.9,1.2l2.8,-2.5l2.7,0.5l1.5,-2.8l2.7,1.3M580.5,328.6l2.3,-2.4l2.2,1.2l3.0,-3.5l2.0,1.3l1.9,-3.3M225.4,291.5l2.6,1.8l1.9,-2.0M523.4,324.4l2.9,-2.2l3.0,0.5M221.0,236.9l1.5,-2.5l2.6,1.9l2.7,-3.3l2.6,0.8M550.5,343.6l2.9,-2.4l2.7,1.8l2.5,-3.3l1.6,1.7l1.7,-2.6M376.3,314.0l2.3,0.7l2.9,-3.2l2.2,1.9l2.6,-2.8M519.7,316.6l3.2,1.6l1.9,-3.3l2.3,1.4M470.7,317.3l2.8,1.0l2.1,-2.6l2.8,1.4l3.1,-3.4l3.2,1.1M446.5,247.2l2.3,0.7l3.2,-2.3M465.1,303.2l2.5,1.4l1.9,-2.0l2.1,0.6M256.6,294.2l1.7,1.0l2.4,-3.0l2.0,0.9l1.7,-2.3l2.1,1.8M275.3,264.7l2.3,-3.1l2.2,1.8l3.0,-2.2l2.5,1.4M383.4,348.2l2.9,-3.6l1.8,1.7l1.8,-3.3l2.9,1.0l2.8,-2.5M190.5,297.6l2.3,-3.2l2.5,0.9M261.8,306.0l1.8,-1.8l2.7,1.3l1.5,-1.8l3.0,0.5M509.6,238.1l2.5,1.9l3.2,-3.3l1.7,1.1M623.3,385.2l3.0,-2.8l2.1,1.3M412.0,232.7l2.4,0.8l2.6,-2.7l1.5,2.0l2.9,-3.6l3.1,1.4M384.1,250.5l2.3,1.1l2.5,-2.2M331.8,274.7l2.4,-2.4l3.0,1.0M186.1,377.4l2.8,0.9l2.6,-2.9l3.0,1.5l2.6,-2.9M587.1,314.5l3.2,-2.8l2.4,1.8l2.2,-3.4l2.0,1.7M337.9,255.8l2.0,-2.0l2.3,1.3M311.6,327.8l2.9,-3.2l1.9,1.9l1.6,-2.0l1.5,2.3l2.4,-3.3M635.2,217.4l2.1,-2.8l2.4,2.0l2.8,-2.6l2.7,1.1l2.5,-2.6M629.5,247.4l1.6,-2.2l2.6,0.7l2.4,-2.1l3.0,0.6l3.1,-3.6M623.1,253.6l3.1,-3.1l1.5,0.8l2.2,-2.9l3.2,1.0M375.6,201.6l2.7,-3.3l2.4,0.6l2.9,-3.4M468.1,388.0l2.0,-3.0l1.9,1.9l2.6,-3.2l2.6,1.5l2.0,-2.6M502.9,202.9l2.9,-2.4l2.9,0.9M570.2,245.2l2.4,-1.9l2.8,1.9l2.2,-2.8l1.7,2.0M596.2,280.7l3.0,1.6l1.8,-2.1M440.8,325.1l2.0,-2.8l1.9,1.4l1.9,-3.2l2.8,0.9M523.5,229.3l2.9,-2.8l2.9,1.0l2.9,-2.7l1.6,2.1M361.3,348.6l1.8,1.9l2.7,-3.5M619.3,366.4l2.3,-2.6l2.1,1.0l2.6,-3.4M253.6,323.4l2.7,1.5l2.6,-2.2l1.8,2.2l1.9,-3.1M176.9,298.3l1.5,1.5l1.9,-2.6l3.0,1.5l2.2,-2.4M271.4,370.8l2.0,-2.4l1.9,1.0l1.7,-3.3l2.7,1.0l1.7,-3.3M587.1,218.0l2.2,1.2l1.5,-2.6l1.9,2.0M267.4,367.8l2.9,-3.2l3.1,1.2l2.1,-2.3l1.9,0.8M303.6,260.2l2.4,-2.7l1.8,1.8M259.5,341.2l2.0,-2.0l1.8,1.0l1.7,-2.2M625.9,271.2l1.6,-1.8l3.0,0.8l1.8,-2.0l2.8,1.9l2.2,-3.0M381.6,238.7l2.1,1.0l2.8,-2.2l2.2,1.7l1.6,-3.2M455.2,323.9l2.0,-2.1l1.8,1.4l1.6,-3.3M228.6,325.5l2.6,0.9l2.9,-3.6l2.4,1.0M615.7,217.4l2.4,-2.4l3.0,1.7M508.6,297.2l1.6,2.2l3.1,-2.5l2.9,1.5l3.0,-3.6M359.4,269.6l2.7,-3.5l2.8,0.8l1.6,-2.4l2.1,2.0l3.0,-3.0M531.5,338.1l2.0,1.4l3.1,-2.2l1.6,2.1l3.2,-3.4M263.1,341.7l3.0,-3.7l1.8,1.5l2.3,-2.4M217.3,250.8l2.7,1.8l2.8,-2.8l2.1,1.3l1.5,-3.2M475.2,296.0l1.9,-1.9l2.6,1.4l2.1,-2.7M313.0,261.1l1.7,-2.9l2.7,0.6l2.1,-2.0l2.7,0.4l3.0,-2.2M561.0,236.5l2.9,-2.2l3.1,0.9l2.4,-3.4l1.8,0.7l1.6,-1.9M362.4,319.8l1.8,1.4l1.7,-3.0M362.7,288.1l1.6,1.8l2.4,-2.9M604.1,243.1l1.9,2.2l2.7,-2.8l1.9,2.0l2.5,-3.5M584.3,342.3l2.9,-3.2l1.7,0.8l1.7,-2.1M526.8,345.8l1.9,2.1l2.3,-2.2l2.8,1.3l1.7,-2.5l2.4,1.6M330.4,278.7l3.1,-2.7l3.0,1.7l2.9,-3.5M348.6,384.3l2.7,1.0l1.8,-2.5M555.1,239.8l2.5,0.5l2.4,-3.3l2.6,1.8M466.8,389.0l2.4,1.2l2.9,-2.9M289.6,275.7l2.4,1.2l1.5,-3.0l3.1,0.4M323.2,239.9l2.4,-3.4l3.1,1.0l1.8,-2.6M363.1,353.7l1.8,-2.2l3.2,0.7M503.3,251.4l2.2,-2.8l2.5,0.9l2.1,-2.6M175.7,310.2l1.6,-2.2l1.9,0.7l2.6,-2.5l3.1,0.5M465.0,374.2l2.1,1.8l2.5,-2.4l1.7,1.7l2.9,-3.6l2.9,1.7M443.2,246.6l2.2,1.5l1.6,-2.9l1.6,1.1l2.5,-3.2M334.0,284.5l2.9,-3.0l3.0,1.5l1.7,-2.9M503.4,207.9l2.8,0.9l2.0,-1.9l1.9,2.0l2.4,-3.2M350.8,342.9l1.8,1.1l3.1,-3.1l1.8,1.6l1.9,-1.9M476.0,221.3l2.7,-2.2l2.6,1.4l2.5,-2.9M477.8,200.5l1.6,-3.0l1.6,2.3l1.8,-2.7l1.6,1.3l2.7,-2.1M525.9,335.7l1.7,0.7l2.8,-3.1l2.8,1.5l2.2,-3.4M351.5,371.4l3.1,1.5l1.9,-2.4l2.5,1.1l1.6,-3.3M378.1,226.6l2.7,-2.1l1.8,0.8l2.0,-3.1M509.2,220.1l2.4,-2.2l2.4,0.8M434.2,373.9l2.5,-2.6l1.7,1.3l2.9,-3.6M609.7,370.0l3.0,1.2l2.4,-2.5M553.9,241.0l1.8,-2.1l2.2,0.8M608.4,257.1l3.2,-3.2l2.0,0.8l2.3,-2.2l2.9,1.6M180.9,326.1l2.9,0.4l1.8,-2.7l2.7,1.1M473.1,279.8l2.7,-2.6l2.1,1.2l2.3,-3.3M279.9,290.9l1.9,-2.8l2.0,1.2l2.9,-2.6l3.1,1.1M576.3,224.5l1.6,-3.0l3.0,1.1l2.3,-3.4l2.2,1.0l1.7,-3.2M545.1,300.1l2.6,-2.2l2.6,1.8M388.2,281.2l3.2,-3.0l2.2,1.8l1.9,-2.9M287.9,293.0l1.9,-2.2l1.8,0.8l2.0,-2.6l2.6,0.9l3.1,-2.4M323.0,258.3l2.0,1.8l2.7,-3.4M454.3,298.2l1.5,1.1l2.5,-3.3l3.1,0.3M335.0,235.8l2.5,-2.4l1.6,1.5l1.6,-2.2l2.9,1.9l1.8,-2.0M329.6,285.6l2.9,-2.3l2.4,0.9l2.6,-2.2M397.1,361.1l1.7,-2.2l1.5,2.1M304.6,387.5l2.5,-2.1l1.6,1.0l3.1,-3.6l2.0,0.7l2.6,-2.3M588.2,374.5l2.7,1.3l2.0,-2.0l3.2,1.2l3.1,-3.3l1.5,1.9M522.0,351.9l2.7,1.9l2.6,-3.2l2.6,0.7l1.9,-2.7M521.9,279.7l2.6,1.4l2.2,-3.2l2.4,0.8l2.8,-2.8M610.5,308.2l1.6,1.4l2.1,-3.4l2.2,1.5M584.5,283.4l3.0,1.2l3.0,-2.8l2.5,0.8l2.7,-3.5l2.7,1.0M196.6,345.8l3.2,-3.1l3.2,0.6M266.0,262.1l1.8,-2.1l2.4,1.8l2.8,-2.1M528.0,321.2l2.6,-3.5l3.0,1.1l2.1,-2.1l2.2,2.1M196.6,353.9l1.9,0.9l1.7,-1.9M313.2,209.6l1.9,1.4l2.9,-2.1l2.7,1.2l1.6,-3.1M541.8,219.3l2.0,-2.3l3.2,1.3l2.9,-2.8l2.7,0.5l1.9,-2.4M490.1,317.9l2.3,-2.9l1.6,1.2M304.0,281.6l1.6,-2.1l2.5,0.5M317.8,353.8l3.1,-2.3l2.6,0.5l2.1,-2.7l1.9,0.7l1.7,-3.0M393.9,289.6l2.2,1.1l2.8,-2.2l2.5,1.8M525.4,346.4l3.2,-2.9l2.6,1.1l2.4,-2.2l2.1,1.2M516.6,230.1l1.6,0.9l2.3,-2.8l2.4,1.0M505.5,217.1l2.3,-2.2l2.8,1.2M611.1,293.3l2.0,-2.4l1.5,2.0M341.0,255.4l2.5,0.9l2.0,-2.5l3.2,0.8M167.2,301.9l2.2,-2.3l1.6,1.2M371.7,330.9l2.1,-3.3l2.6,1.1l1.9,-3.0l3.1,0.7M568.4,271.0l1.6,-2.5l2.6,1.9l2.5,-3.3l1.7,2.1l1.9,-2.9M630.9,285.5l2.4,1.3l2.7,-2.8l2.5,0.9l1.8,-2.1M626.2,312.2l1.6,-2.7l2.4,1.0M361.0,356.0l3.1,-2.7l2.6,1.5l2.9,-3.2M553.8,264.1l2.8,1.5l1.7,-2.0l2.0,1.6l1.6,-2.7M217.6,236.8l2.7,-3.5l1.9,0.8l3.0,-3.0l3.1,1.4M222.5,268.8l1.5,1.0l2.3,-2.3l2.4,1.2M289.3,270.3l2.7,-2.6l2.6,1.7l2.1,-2.6M202.8,229.7l2.5,1.3l2.5,-2.4M284.8,368.0l2.5,-3.0l2.2,1.7l2.5,-2.0l2.2,2.0M603.1,268.7l2.5,0.8l3.1,-3.4l1.9,1.2M176.1,344.8l2.9,1.5l2.8,-2.9l1.9,0.7M445.3,202.5l2.1,-2.6l3.1,1.4l2.2,-2.5l3.1,1.1M445.6,346.7l1.6,-2.0l2.1,2.0M246.1,328.1l2.0,1.2l3.1,-2.4M222.7,289.8l1.7,1.5l2.1,-3.3l1.7,1.2l2.4,-2.1M439.6,210.5l2.4,0.7l2.0,-1.9l1.6,1.2M618.3,326.5l2.6,-3.5l2.6,1.0l2.9,-3.3M313.8,209.0l3.0,1.3l2.5,-2.5l2.7,0.6M379.8,216.2l2.2,1.1l2.5,-2.7M533.8,300.6l2.2,0.8l2.0,-2.7l2.0,0.8l2.0,-3.3M464.5,248.3l2.7,0.5l2.7,-3.6l2.0,1.2l2.8,-2.5M566.2,389.3l2.2,0.6l2.9,-3.1l2.8,1.4M528.4,285.5l2.6,-2.2l2.1,2.0l3.2,-2.4l2.3,1.1l2.6,-2.9M285.3,367.2l2.7,2.0l2.4,-2.9l2.8,0.7l1.6,-3.0l2.7,1.6M544.1,238.1l3.1,-3.0l3.0,0.4l1.8,-2.6l2.6,1.0M194.6,368.3l1.9,1.8l2.5,-2.3M317.6,245.8l2.5,1.5l2.1,-3.0l1.9,1.3l1.6,-2.9M347.9,369.5l2.4,1.2l1.7,-3.2l1.7,1.5l2.7,-2.1l1.9,2.1M198.3,377.9l2.7,-3.0l2.2,1.5M445.8,314.3l2.2,-2.4l2.2,1.5l1.9,-2.3M256.1,254.1l2.9,-2.6l2.8,1.0l1.7,-2.6l2.0,0.9M635.1,378.0l2.6,0.9l1.7,-2.6l1.8,1.9l2.5,-2.3l2.8,1.9M390.4,384.3l1.5,1.5l2.1,-3.3l2.4,2.0l1.8,-2.3l1.5,0.8M501.3,206.3l2.2,2.0l1.9,-1.8l2.7,1.5M226.6,376.3l2.7,0.6l2.6,-2.5l2.1,1.1l1.6,-3.0l2.8,0.4M406.2,204.4l1.6,-2.0l1.9,1.4l2.9,-3.6l3.0,1.3M586.0,248.5l2.7,0.7l2.9,-3.5M229.0,369.4l1.7,-2.2l3.0,1.6M357.1,334.1l2.5,-3.3l3.0,0.6l2.7,-2.6l2.8,0.6l2.3,-3.0M600.3,379.1l2.6,-3.6l3.1,1.7l1.7,-2.3l1.7,1.7l2.4,-2.1M198.1,288.3l2.8,1.0l2.4,-3.2l1.9,1.5l2.9,-2.8M375.5,281.2l1.7,1.5l2.5,-3.0M195.5,338.2l2.2,0.8l2.9,-3.1l2.9,1.2l1.7,-2.3M197.7,218.8l2.2,-1.9l2.8,1.9M175.7,269.1l2.7,1.4l1.7,-3.1l2.7,1.2l2.9,-3.6l1.5,1.2M461.4,299.9l1.6,2.0l1.6,-2.8l1.9,2.2l1.9,-3.3l1.6,0.8M421.5,276.4l2.7,-2.8l2.8,1.1l1.5,-2.3M434.7,266.0l1.7,0.8l1.7,-3.1l2.1,2.0l2.5,-2.3l2.2,1.7M297.5,304.5l2.6,2.0l2.0,-3.3M393.5,365.1l3.0,0.4l2.0,-2.6M553.4,235.4l2.9,-2.8l2.6,1.5l3.0,-2.6l1.9,2.0l2.6,-2.1M606.1,388.9l1.9,-2.2l2.8,1.4l1.6,-2.5l3.1,1.6l1.7,-2.0M190.2,259.2l1.6,-2.8l3.1,1.6l2.5,-2.2l1.9,2.1M576.0,242.0l2.2,1.7l1.8,-2.0l2.1,1.7l1.5,-2.0M514.8,211.2l2.0,-1.8l1.7,1.8l3.2,-3.1l2.6,0.7M491.5,202.4l2.5,1.3l1.6,-3.2l2.5,1.6l1.7,-3.3l1.7,1.4M255.8,386.5l2.3,1.8l1.9,-2.3l1.9,1.7l2.3,-2.6l3.1,1.8M477.7,318.3l2.5,-3.3l1.9,0.8M470.3,270.2l2.3,-2.8l2.9,0.6l1.9,-2.4M507.7,262.4l1.6,-1.7l2.1,1.8l2.3,-2.0l2.0,2.1M509.2,258.8l2.1,1.3l2.2,-2.3l1.8,0.7M582.5,385.3l1.7,1.7l2.4,-2.8l1.7,1.0M614.1,234.5l1.7,-2.6l2.4,1.5l2.0,-2.0l2.8,1.5l2.7,-2.9M617.9,361.2l3.0,1.0l2.1,-2.8l1.9,0.8l3.0,-2.7M206.8,276.3l3.0,1.1l2.0,-2.7l1.6,1.5M536.0,383.8l2.1,-2.6l2.0,2.1M269.8,357.3l2.1,-3.0l2.2,0.8M194.2,344.6l2.2,1.1l3.1,-2.2l2.8,1.1M415.8,247.6l2.0,-1.9l3.0,1.6l1.6,-1.9l2.0,0.6M398.9,361.2l2.0,1.0l2.5,-2.7l1.7,1.5l3.1,-3.5M459.4,363.9l2.3,1.6l1.8,-2.7l2.4,1.0l2.3,-2.2l2.6,0.6M374.4,210.6l2.3,-2.4l3.1,1.6l2.8,-2.4l2.1,1.1M320.8,325.6l1.6,0.9l2.4,-3.5l3.1,1.8l2.8,-2.1M532.3,271.1l2.7,-3.0l2.3,1.9M227.9,252.2l3.0,1.7l2.2,-3.2M429.7,376.9l2.8,1.7l3.2,-2.3l2.5,0.9l2.2,-2.6M471.0,265.7l2.7,0.5l2.8,-3.3l3.1,0.4l2.0,-2.9l2.1,1.4M288.9,278.0l1.7,2.0l2.3,-2.6l2.0,2.0l3.1,-2.3M418.7,225.7l2.9,1.5l2.8,-2.1l2.1,0.8l2.9,-2.3l3.1,0.8M233.1,332.5l2.1,1.3l2.6,-2.8l2.6,1.7M624.3,318.0l2.3,-2.5l2.9,1.2l2.7,-3.3l2.7,1.8l2.3,-3.0M584.8,292.7l1.8,-3.1l2.4,2.0l2.5,-2.4l1.7,2.1M281.4,231.4l1.7,-2.6l2.5,1.1M243.2,330.1l2.0,1.8l2.7,-3.1M492.7,205.2l2.9,-2.4l1.7,1.6M424.8,335.8l1.5,-3.0l3.0,1.2l2.3,-2.3l2.1,1.5M293.0,383.0l2.5,1.2l1.8,-2.6l2.9,0.4l1.8,-2.9M351.7,352.0l2.1,-2.9l1.7,1.1M282.4,280.5l1.9,1.9l2.6,-3.6l1.9,1.3M534.1,249.2l2.0,-2.2l1.6,1.4l1.6,-2.1M317.1,239.3l2.1,-1.8l2.1,0.9l3.0,-3.2l1.6,2.0l1.9,-2.3M419.7,201.3l3.0,-3.6l2.5,1.6l1.5,-2.1l1.6,1.0l1.9,-2.2M208.8,320.5l2.1,-2.9l1.9,1.6M518.3,206.8l2.9,1.8l2.9,-2.2l2.2,1.4l2.2,-2.1M442.4,222.6l2.2,-3.5l2.2,2.1l2.6,-3.0M598.6,310.7l2.4,0.8l2.7,-2.1l1.7,1.1M344.5,264.0l2.0,1.6l2.3,-2.2l2.9,1.4l2.4,-3.2M164.4,308.8l2.1,0.8l1.9,-2.2l2.7,0.6M233.8,384.9l2.5,-2.9l1.8,1.0l2.0,-2.4l3.0,1.9M512.1,244.7l1.6,-1.8l1.7,1.3l3.1,-3.4M181.0,312.3l1.8,-3.0l2.9,0.8l2.8,-2.8M638.4,305.7l2.1,2.1l2.6,-2.8l2.1,2.1l2.7,-3.0M456.1,297.6l3.0,1.5l1.6,-3.3l1.5,2.0l2.3,-3.4M614.6,342.0l2.6,-2.2l2.2,0.7M304.7,210.0l2.0,-2.8l1.6,0.9l3.2,-2.7l3.2,0.8l2.8,-3.2M390.3,376.5l1.9,1.1l3.0,-3.1l2.3,0.5l2.9,-2.7M294.0,339.3l2.4,-3.3l1.6,1.9l2.9,-2.9l1.9,1.9M366.4,249.7l2.3,-1.9l1.5,1.6l1.6,-2.7M223.9,347.5l2.7,-2.4l3.2,1.0M408.1,361.4l2.0,0.7l2.0,-2.4l2.5,0.6l3.0,-3.4M517.9,387.8l2.7,1.8l1.8,-2.4M255.9,375.9l1.7,1.3l1.9,-3.3l2.5,1.4l2.6,-2.5l2.8,1.3M481.4,223.1l1.9,1.2l3.2,-3.3l1.9,2.0M610.6,262.7l3.0,1.4l2.6,-3.5l2.3,0.7M163.6,337.4l3.2,-2.6l1.8,1.6l1.5,-1.8l1.6,1.2l2.3,-2.2M490.0,344.2l2.9,1.5l2.0,-2.7l2.9,0.7l2.1,-1.9M448.6,221.7l1.7,-2.2l2.2,1.7l2.8,-2.7l2.3,1.2l1.8,-1.8M359.3,259.5l3.0,-2.2l2.7,0.4l2.2,-2.3l2.2,1.5M408.4,335.9l2.2,1.7l2.7,-2.3l2.6,0.5l2.7,-3.3M367.7,319.2l1.8,-1.7l3.1,1.4l3.1,-2.6l2.8,1.7M461.6,206.4l1.6,0.7l2.4,-3.5l2.4,1.6l2.8,-2.8M230.8,359.2l2.4,1.4l1.6,-2.5l2.9,0.7M462.9,337.7l2.3,0.5l2.6,-2.5l2.3,1.2l3.2,-2.5M394.8,345.2l2.8,-2.4l3.2,1.6l3.1,-2.8l2.4,1.4l1.8,-1.9M369.5,321.5l1.8,1.8l1.6,-2.7l1.9,0.9l2.5,-2.6M187.2,228.2l3.0,1.4l2.6,-2.4M423.4,322.6l1.7,0.9l1.9,-2.4l2.0,2.2M606.0,315.9l2.4,-2.6l2.3,0.8l2.8,-3.6M180.6,369.7l1.7,-2.8l2.6,1.0M546.3,208.5l3.1,-2.2l1.8,1.4l2.1,-1.9l2.9,1.6l2.5,-2.6" stroke="#1f4288" stroke-width="0.6" fill="none" opacity="0.65" stroke-linejoin="round"/>
<filter id="vb" x="-20%" y="-20%" width="140%" height="140%"><feGaussianBlur stdDeviation="1.6"/></filter>
<path d="M277,254 L282,266 L284,279 L289,291 L300,293 L310,289 L311,271 L310,256z" fill="#4a82d2" opacity="0.85" filter="url(#vb)"/>
<path d="M399,248 C404,252 412,264 420,263 C428,262 434,258 437,252 C430,250 412,249 399,248z" fill="#3f72c4" opacity="0.8"/>
<polygon points="290.5,382.2 306.6,371.0 333.3,363.0 359.9,352.3 386.5,337.7 413.2,331.0 429.1,317.7 439.8,310.4 466.4,303.4 500.0,295.4 546.5,283.0 583.8,269.4 626.3,266.3 626.3,266.3 290.5,382.7" fill="#3a6cc0"/>
<path d="M291.0,383.0L292.4,381.6L293.8,382.1zM293.8,382.1L295.0,379.8L296.2,381.2zM296.2,381.2L297.6,377.9L299.0,380.3zM299.0,380.3L300.4,377.1L301.9,379.3zM301.9,379.3L303.3,374.3L304.6,378.3zM304.6,378.3L306.0,373.7L307.5,377.3zM307.5,377.3L308.6,371.7L309.7,376.5zM309.7,376.5L311.0,370.4L312.3,375.6zM312.3,375.6L313.7,370.9L315.1,374.7zM315.1,374.7L316.2,369.1L317.4,373.9zM317.4,373.9L318.7,369.9L320.1,373.0zM320.1,372.9L321.4,369.4L322.8,372.0zM322.8,372.0L323.9,368.3L325.1,371.2zM325.1,371.2L326.7,367.0L328.4,370.1zM328.4,370.1L329.6,365.4L330.8,369.2zM330.8,369.2L332.2,364.6L333.6,368.3zM333.6,368.3L334.9,365.0L336.2,367.4zM336.2,367.3L337.9,362.4L339.5,366.2zM339.5,366.2L340.5,360.5L341.5,365.5zM341.5,365.5L342.8,360.8L344.1,364.7zM344.1,364.6L345.7,360.0L347.3,363.5zM347.3,363.5L348.7,358.7L350.1,362.6zM350.1,362.5L351.7,356.8L353.4,361.4zM353.4,361.4L354.8,356.0L356.2,360.4zM356.2,360.4L357.5,356.2L358.8,359.6zM358.8,359.5L360.3,355.0L361.9,358.5zM361.9,358.4L363.0,351.9L364.1,357.7zM364.1,357.7L365.8,351.1L367.4,356.6zM367.4,356.5L368.7,348.4L370.0,355.7zM370.0,355.6L371.4,348.9L372.8,354.7zM372.8,354.7L374.5,347.3L376.3,353.5zM376.3,353.5L377.9,343.7L379.6,352.3zM379.6,352.3L380.7,341.2L381.7,351.6zM381.7,351.6L383.0,340.3L384.3,350.7zM384.3,350.7L385.7,342.5L387.2,349.7zM387.2,349.7L388.4,340.8L389.5,348.9zM389.5,348.9L390.6,337.2L391.8,348.1zM391.8,348.1L393.1,341.1L394.4,347.2zM394.4,347.2L396.0,336.7L397.6,346.1zM397.6,346.1L398.9,337.6L400.2,345.2zM400.2,345.2L401.8,338.4L403.4,344.1zM403.4,344.1L404.5,334.7L405.7,343.3zM405.7,343.3L407.4,334.5L409.0,342.1zM409.0,342.1L410.2,334.9L411.4,341.3zM411.4,341.3L412.9,332.7L414.3,340.3zM414.3,340.3L415.3,332.2L416.3,339.6zM416.3,339.6L417.9,331.1L419.4,338.5zM419.4,338.5L420.8,329.8L422.1,337.6zM422.1,337.6L423.4,324.3L424.6,336.7zM424.6,336.7L426.1,326.8L427.6,335.7zM427.6,335.7L429.1,320.6L430.6,334.7zM430.6,334.7L431.8,316.9L433.1,333.8zM433.1,333.8L434.5,318.6L435.8,332.9zM435.8,332.8L437.0,313.9L438.3,332.0zM438.3,332.0L439.6,317.9L440.8,331.1zM440.8,331.1L442.4,311.9L444.0,330.0zM444.0,330.0L445.6,316.8L447.2,328.9zM447.2,328.9L448.4,308.7L449.7,328.0zM449.7,328.0L451.2,309.8L452.7,327.0zM452.7,327.0L453.9,310.5L455.1,326.2zM455.1,326.2L456.7,315.1L458.4,325.0zM458.4,325.0L460.0,311.3L461.6,323.9zM461.6,323.9L463.3,306.0L464.9,322.8zM464.9,322.8L466.4,306.1L468.0,321.7zM468.0,321.7L469.7,304.6L471.4,320.5zM471.4,320.5L473.1,303.0L474.7,319.4zM474.7,319.3L476.4,306.9L478.1,318.2zM478.1,318.2L479.2,307.7L480.4,317.4zM480.4,317.4L481.8,301.2L483.2,316.4zM483.2,316.4L484.4,299.9L485.7,315.6zM485.7,315.5L486.8,305.7L487.9,314.8zM487.9,314.8L489.5,299.3L491.1,313.7zM491.1,313.7L492.6,301.7L494.1,312.6zM494.1,312.6L495.8,303.5L497.5,311.5zM497.5,311.4L498.7,300.9L499.8,310.7zM499.8,310.7L501.2,298.9L502.5,309.7zM502.5,309.7L504.1,298.2L505.6,308.7zM505.6,308.6L507.2,299.2L508.8,307.5zM508.8,307.5L510.1,297.4L511.4,306.6zM511.4,306.6L513.0,293.1L514.5,305.6zM514.5,305.6L516.1,293.3L517.7,304.5zM517.7,304.5L519.0,294.2L520.2,303.6zM520.2,303.6L521.9,292.9L523.5,302.5zM523.5,302.4L525.0,294.0L526.5,301.4zM526.5,301.4L528.3,291.4L530.0,300.2zM530.0,300.2L531.7,289.1L533.3,299.0zM533.3,299.0L534.7,289.8L536.0,298.1zM536.0,298.1L537.2,289.9L538.4,297.3zM538.4,297.3L539.5,288.8L540.7,296.5zM540.7,296.5L542.1,286.6L543.5,295.5zM543.5,295.5L545.1,285.2L546.7,294.4zM546.7,294.4L548.0,283.1L549.4,293.5zM549.4,293.5L550.8,283.8L552.2,292.5zM552.2,292.5L553.5,283.5L554.7,291.6zM554.7,291.6L556.0,283.4L557.2,290.8zM557.2,290.7L558.6,281.5L559.9,289.8zM559.9,289.8L561.4,280.4L562.9,288.8zM562.9,288.8L564.4,277.1L565.8,287.8zM565.8,287.8L567.0,276.0L568.3,286.9zM568.3,286.9L569.7,277.0L571.1,285.9zM571.1,285.9L572.5,276.8L573.8,285.0zM573.8,285.0L575.6,277.0L577.3,283.8zM577.3,283.8L578.9,276.6L580.5,282.7zM580.5,282.7L581.8,273.3L583.0,281.8zM583.0,281.8L584.7,273.4L586.4,280.6zM586.4,280.6L587.9,272.8L589.3,279.6zM589.3,279.6L590.8,272.0L592.3,278.6zM592.3,278.6L593.7,271.0L595.1,277.6zM595.1,277.6L596.1,272.3L597.1,276.9zM597.1,276.9L598.1,270.0L599.1,276.2zM599.1,276.2L600.4,270.2L601.6,275.4zM601.6,275.4L602.8,269.3L604.1,274.5zM604.1,274.5L605.2,270.8L606.3,273.8zM606.3,273.7L607.8,269.7L609.3,272.7zM609.3,272.7L610.9,268.5L612.5,271.6zM612.5,271.6L613.9,267.8L615.3,270.6zM615.3,270.6L616.8,268.6L618.3,269.6zM618.3,269.6L619.8,267.8L621.3,268.6zM621.3,268.6L622.6,267.4L623.8,267.7zM623.8,267.7L625.4,267.0L626.9,266.6z" fill="#4880d4"/>
<path d="M174.0,287.1l-0.1,-5.8M176.3,289.0l0.3,-4.5M178.3,290.6l0.2,-3.1M180.3,292.2l0.1,-4.0M182.6,294.1l-0.2,-5.9M184.4,295.6l0.4,-3.6M187.2,297.9l-0.3,-2.2M189.1,299.4l0.2,-5.1M190.8,300.8l0.4,-5.2M193.5,303.1l0.3,-3.4M195.4,304.6l-0.4,-5.7M197.5,306.3l0.3,-3.2M200.1,308.5l0.0,-4.1M202.1,310.1l-0.5,-4.3M204.7,312.2l-0.0,-5.8M206.9,314.0l-0.1,-4.3M209.8,316.3l-0.0,-2.9M212.3,318.4l-0.2,-5.0M214.0,319.8l-0.4,-4.8M216.7,322.0l0.4,-2.1M219.4,324.2l0.4,-4.0M222.1,326.4l-0.2,-4.7M223.7,327.7l-0.4,-2.5M226.3,329.8l0.4,-4.8M228.3,331.5l0.4,-3.5M231.0,333.7l-0.5,-5.9M233.9,336.1l0.3,-3.7M235.8,337.6l0.3,-4.2M238.3,339.7l-0.4,-4.8M241.2,342.0l0.3,-2.2M243.6,343.9l-0.3,-4.5M246.2,346.1l-0.3,-5.0M249.1,348.5l0.4,-3.7M251.0,350.0l-0.3,-3.5M252.5,351.3l-0.3,-2.6M254.8,353.1l-0.4,-3.9M257.7,355.5l0.0,-4.5M259.6,357.0l0.4,-3.7M261.7,358.8l0.4,-4.0M263.8,360.5l-0.4,-5.4M266.4,362.6l-0.2,-2.5M268.0,363.9l0.4,-5.5M270.7,366.1l-0.4,-4.0M273.0,368.0l0.2,-5.6M274.5,369.2l0.4,-6.0M276.9,371.1l0.2,-2.1M279.3,373.1l-0.1,-2.0M280.8,374.4l0.2,-2.2M283.5,376.5l-0.3,-3.3M285.4,378.1l0.1,-2.9M287.3,379.7l-0.5,-5.7M289.2,381.2l-0.1,-4.5" stroke="#5a90e0" stroke-width="0.7" fill="none" opacity="0.8"/>
<rect x="100" y="150" width="540" height="240" fill="#5aa0f0" opacity="0.45" mask="url(#outm)"/>
</g>
<polyline points="126.7,248.5 226.7,213.5 273,205.2 468,171.2 503.8,166.3" fill="none" stroke="#c48a6a" stroke-width="0.7"/>
<polygon points="305.9,161.7 370.3,151.7 370.3,191 305.9,201" fill="#ffa088" opacity="0.85"/>
<polygon points="312.5,230 326.4,251 326.4,289.7" fill="#8890a8" opacity="0.22"/>
<polygon points="326.4,251 370,246 370,281 326.4,289.7" fill="#8890a8" opacity="0.25"/>
<line x1="275.0" y1="205.0" x2="326.4" y2="287.8" stroke="#3c4690" stroke-width="3.6" stroke-linecap="round"/>
<line x1="275.0" y1="205.0" x2="326.4" y2="287.8" stroke="#6472ba" stroke-width="1.7"/>
<line x1="312.6" y1="197.5" x2="365.3" y2="281.5" stroke="#3c4690" stroke-width="3.6" stroke-linecap="round"/>
<line x1="312.6" y1="197.5" x2="365.3" y2="281.5" stroke="#6472ba" stroke-width="1.7"/>
<line x1="352.7" y1="193.8" x2="404.0" y2="276.5" stroke="#3c4690" stroke-width="3.6" stroke-linecap="round"/>
<line x1="352.7" y1="193.8" x2="404.0" y2="276.5" stroke="#6472ba" stroke-width="1.7"/>
<line x1="390.0" y1="185.0" x2="437.7" y2="261.5" stroke="#3c4690" stroke-width="3.6" stroke-linecap="round"/>
<line x1="390.0" y1="185.0" x2="437.7" y2="261.5" stroke="#6472ba" stroke-width="1.7"/>
<line x1="428.9" y1="178.8" x2="477.8" y2="257.8" stroke="#3c4690" stroke-width="3.6" stroke-linecap="round"/>
<line x1="428.9" y1="178.8" x2="477.8" y2="257.8" stroke="#6472ba" stroke-width="1.7"/>
<line x1="467.7" y1="173.8" x2="514.0" y2="247.7" stroke="#3c4690" stroke-width="3.6" stroke-linecap="round"/>
<line x1="467.7" y1="173.8" x2="514.0" y2="247.7" stroke="#6472ba" stroke-width="1.7"/>
<polyline points="326.4,290.8 400,275.8 444,270.3 540,250" fill="none" stroke="#7a4aa0" stroke-width="0.7" opacity="0.8"/>
<line x1="326.8" y1="248" x2="326.8" y2="290.5" stroke="#2040ff" stroke-width="1.3" stroke-dasharray="3,0.6"/>
<line x1="310" y1="266" x2="325" y2="288.6" stroke="#30c060" stroke-width="0.8"/>
<circle cx="326.8" cy="291" r="1.5" fill="#c8d8f0"/>
<polygon points="271.7,199.6 468,168.8 468,175.2 271.7,205.8" fill="#a84040" stroke="#702020" stroke-width="0.9"/>
<polygon points="274,201.8 466,171.7 466,173 274,203.2" fill="#c86060" opacity="0.9"/>
<line x1="271.7" y1="206.6" x2="468" y2="176" stroke="#e0a070" stroke-width="0.6"/>
<polygon points="389.5,179 426.5,173.2 426.5,180 389.5,186" fill="#a4a8dc" stroke="#7a80b8" stroke-width="0.7"/>
<rect x="311.1" y="192.1" width="3" height="7.5" fill="#b09a88" stroke="#6a4a40" stroke-width="0.5"/>
<rect x="351.2" y="185.8" width="3" height="7.5" fill="#b09a88" stroke="#6a4a40" stroke-width="0.5"/>
<path d="M350,161 C370,163 384,174 384,184 C384,190 382,195 379,198" fill="none" stroke="#333" stroke-width="0.7"/>
<line x1="350" y1="165" x2="352" y2="225" stroke="#666" stroke-width="0.4" stroke-dasharray="1,1"/>
<ellipse cx="352" cy="209" rx="1.6" ry="3.2" fill="#fff" stroke="#222" stroke-width="0.7"/>
<ellipse cx="383.6" cy="178" rx="4.4" ry="3.4" fill="#fff" stroke="#111" stroke-width="1.2"/><circle cx="383.6" cy="178" r="1.2" fill="#111"/>
<path d="M341.6,194.6 l2.2,-1.6 l3.4,3.6 l1.7,-1.5 l0.6,5.4 l-5.4,-0.6 l1.6,-1.6z" fill="#2a98e8" stroke="#fff" stroke-width="0.7"/>
</svg>
<div class="a" style="left:412px;top:187.5px;width:120px;height:8.2px;background:#fff;border:0.5px solid #ccc"></div>
<div class="a" style="left:414px;top:187.3px;font-size:5.5px;color:#222;line-height:8px">Position cut plane or select cut type and fill type</div>
<div id="tb">
<div class="a" style="left:0;top:0;width:505px;height:1px;background:#dadada"></div>
<div class="a" style="left:637px;top:0;width:114px;height:1px;background:#dadada"></div>
<div class="a" style="left:6.9px;top:5px;width:50.8px;height:28.5px;border:1px solid #d6d6d6;border-radius:3px;background:#f3f3f3"></div>
<div class="a" style="left:20.5px;top:15px;font-size:5.0px;font-weight:bold;color:#333;line-height:8px">DESIGN</div>
<div class="a" style="left:42.5px;top:15.5px;font-size:4px;color:#666;line-height:8px">&#9662;</div>
<div class="tab" style="left:70.4px;">SOLID</div>
<div class="tab" style="left:108.0px;">SURFACE</div>
<div class="tab" style="left:152.5px;font-weight:bold;color:#333">MESH</div>
<div class="tab" style="left:188.2px;">SHEET METAL</div>
<div class="tab" style="left:244.0px;">PLASTIC</div>
<div class="tab" style="left:286.0px;">MANAGE</div>
<div class="tab" style="left:328.0px;">UTILITIES</div>
<div class="a" style="left:147px;top:10px;width:26px;height:1.5px;background:#333"></div>
<div class="grp" style="left:78.0px">CREATE <span style="font-size:4px">&#9662;</span></div>
<div class="grp" style="left:139.0px">PREPARE <span style="font-size:4px">&#9662;</span></div>
<div class="grp" style="left:255.0px">MODIFY <span style="font-size:4px">&#9662;</span></div>
<div class="grp" style="left:372.8px">ASSEMBLE <span style="font-size:4px">&#9662;</span></div>
<div class="grp" style="left:437.5px">CONFIGURE <span style="font-size:4px">&#9662;</span></div>
<div class="grp" style="left:484.3px">CONSTRUCT <span style="font-size:4px">&#9662;</span></div>
<div class="grp" style="left:532.2px">INSPECT <span style="font-size:4px">&#9662;</span></div>
<div class="grp" style="left:573.0px">INSERT <span style="font-size:4px">&#9662;</span></div>
<div class="grp" style="left:613.6px">SELECT <span style="font-size:4px">&#9662;</span></div>
<div class="grp" style="left:649.7px">EXPORT <span style="font-size:4px">&#9662;</span></div>
<div class="sep" style="left:122.3px"></div>
<div class="sep" style="left:186.6px"></div>
<div class="sep" style="left:347.8px"></div>
<div class="sep" style="left:430.6px"></div>
<div class="sep" style="left:478.0px"></div>
<div class="sep" style="left:525.3px"></div>
<div class="sep" style="left:563.0px"></div>
<div class="sep" style="left:607.2px"></div>
<div class="sep" style="left:643.3px"></div>
<svg class="a" style="left:63.5px;top:12.0px" width="17" height="17" viewBox="0 0 17 17"><polygon points="5.8,3.2 12.4,3.2 15.7,6.5 15.7,12.3 12.4,15.6 5.8,15.6 2.5,12.3 2.5,6.5" fill="#d6b95c"/><path d="M3.3,6.3 q6.6,-0.8 11.6,0" stroke="#b3953c" stroke-width="0.6" fill="none"/><path d="M3.3,9.4 q6.6,-0.8 11.6,0" stroke="#b3953c" stroke-width="0.6" fill="none"/><path d="M3.3,12.5 q6.6,-0.8 11.6,0" stroke="#b3953c" stroke-width="0.6" fill="none"/><path d="M0.8,2.2h5.2v-1.6l3.4,2.8l-3.4,2.8v-1.6h-5.2z" fill="#1a8ae6"/></svg><svg class="a" style="left:83.5px;top:12.0px" width="17" height="17" viewBox="0 0 17 17"><path d="M1,2.2 v6.8 a3,1.2 0 0 0 6,0 v-6.8z" fill="#ececec" stroke="#9a9a9a" stroke-width="0.6"/><ellipse cx="4" cy="2.2" rx="3" ry="1.2" fill="#f8f8f8" stroke="#9a9a9a" stroke-width="0.6"/><circle cx="11.5" cy="11.3" r="4.3" fill="#d6b95c"/><path d="M8.5,9.5q3,-0.8 6,0M7.8,11.5q3.7,-0.8 7.4,0M8.5,13.5q3,-0.8 6,0" stroke="#b3953c" stroke-width="0.5" fill="none"/><path d="M2.2,11.5v2.6h3" stroke="#222" stroke-width="0.8" fill="none"/><path d="M5,12.8l2,1.3l-2,1.3z" fill="#222"/></svg><svg class="a" style="left:103.5px;top:12.0px" width="16" height="16" viewBox="0 0 16 16"><polygon points="1,8.4 4.2,2.4 15,2.4 11.8,8.4" fill="#e8874a"/><circle cx="8.5" cy="11.8" r="3.9" fill="#d6b95c"/><path d="M5.5,11q3,-0.8 6,0M5.5,13q3,-0.8 6,0" stroke="#b3953c" stroke-width="0.5" fill="none"/><ellipse cx="8" cy="5.4" rx="3.3" ry="1.5" fill="none" stroke="#8ac8f4" stroke-width="1.2"/></svg><svg class="a" style="left:127.5px;top:12.0px" width="16" height="16" viewBox="0 0 16 16"><polygon points="1.5,4.5 5,1.3 14.8,1.3 14.8,10.5 11.5,13.5 1.5,13.5" fill="#d6b95c"/><polygon points="1.5,4.5 5,1.3 14.8,1.3 11.5,4.5" fill="#e6cf80"/><polygon points="11.5,4.5 14.8,1.3 14.8,10.5 11.5,13.5" fill="#b3953c"/><rect x="5" y="11.2" width="10.5" height="4.2" rx="2.1" fill="#8c6c44"/><rect x="8.5" y="12.1" width="3.5" height="2.4" fill="#e8d8b8"/></svg><svg class="a" style="left:147.5px;top:12.0px" width="15" height="15" viewBox="0 0 15 15"><polygon points="3.5,1 11,1 14,4 14,11.5 11,14.5 3.5,14.5 0.8,11.5 0.8,4" fill="#e65a5a"/><polygon points="3.5,1 11,1 13,4 2,4" fill="#3cb878"/><polygon points="0.8,4 3.5,1 4,4" fill="#30a8e0"/><polygon points="0.8,4 3.5,4 3.5,14.5 0.8,11.5" fill="#f0a060"/><polygon points="11,4 14,4 14,11.5 11,14.5" fill="#2a88d8"/><polygon points="11,1 14,4 11,4" fill="#e8c060"/></svg><svg class="a" style="left:166.5px;top:12.0px" width="17" height="16" viewBox="0 0 17 16"><polygon points="1,3.5 4,0.8 12,0.8 14.5,3.5 14.5,11.5 12,14 4,14 1,11.5" fill="#d6b95c"/><rect x="3.5" y="4.5" width="10" height="4.2" fill="#3a88d8"/><rect x="3.5" y="8.7" width="9" height="3.6" fill="#e05a5a"/><path d="M13,8.8v6.5M9.8,12h6.5" stroke="#18a040" stroke-width="2"/></svg><svg class="a" style="left:190.5px;top:12.0px" width="16" height="16" viewBox="0 0 16 16"><rect x="1" y="1.5" width="7" height="12.5" fill="#f7f7f7" stroke="#9a9a9a" stroke-width="0.6" /><path d="M3,1.5v12.5" stroke="#ccc" stroke-width="0.5"/><rect x="8" y="1.5" width="7.5" height="12.5" fill="#d6b95c"/><path d="M9,4l5,-2M9,8l6,-3M9,12l6,-3" stroke="#b3953c" stroke-width="0.5"/><circle cx="8" cy="8" r="1.4" fill="#222"/><path d="M4.5,8h3" stroke="#444" stroke-width="1"/></svg><svg class="a" style="left:210.3px;top:12.0px" width="16" height="16" viewBox="0 0 16 16"><rect x="1" y="1.5" width="7" height="12.5" fill="#f7f7f7" stroke="#9a9a9a" stroke-width="0.6" stroke-dasharray="1,0.8"/><path d="M3,1.5v12.5" stroke="#ccc" stroke-width="0.5"/><rect x="8" y="1.5" width="7.5" height="12.5" fill="#d6b95c"/><path d="M9,4l5,-2M9,8l6,-3M9,12l6,-3" stroke="#b3953c" stroke-width="0.5"/><circle cx="8" cy="8" r="1.4" fill="#222"/><path d="M4.5,8h3" stroke="#444" stroke-width="1"/></svg><div class="a" style="left:229.2px;top:11.2px;width:17.6px;height:17.5px;background:#dcecf8;border:0.8px solid #a8d0ee"></div><svg class="a" style="left:230.0px;top:12.0px" width="16" height="16" viewBox="0 0 16 16"><polygon points="3,5 6,2 12,1.8 12.8,4 8,14 4,13.5 2.8,10" fill="#d6b95c"/><polygon points="8,6 12.8,3.5 12.8,10.5 8,14" fill="#e8884a"/><polygon points="3,5 6,2 12.8,3.5 8,6" fill="#e6cf80"/></svg><svg class="a" style="left:249.5px;top:12.0px" width="17" height="16" viewBox="0 0 17 16"><polygon points="1,4 4,1 15.5,1 15.5,12 12.5,15 1,15" fill="#f4f4f4" stroke="#888" stroke-width="0.7"/><polygon points="12.5,4 15.5,1 15.5,12 12.5,15" fill="#d8d8d8"/><path d="M1,4h11.5v11M12.5,4l3,-3" stroke="#888" stroke-width="0.6" fill="none"/><polygon points="3,7 6.5,7 6.5,10.5 10,10.5 10,13.5 3,13.5" fill="#d6b95c"/></svg><svg class="a" style="left:269.5px;top:12.0px" width="16" height="16" viewBox="0 0 16 16"><polygon points="6,2.5 8,0.8 15,0.8 15,8 13,9.5 6,9.5" fill="#d6b95c"/><polygon points="1,6.5 3,4.8 10,4.8 10,12.5 8,14.5 1,14.5" fill="#d6b95c"/><polygon points="1,6.5 3,4.8 10,4.8 8,6.5" fill="#e6cf80"/></svg><svg class="a" style="left:289.5px;top:12.0px" width="15" height="15" viewBox="0 0 15 15"><path d="M7.5,2v11M2,7.5h11" stroke="#151515" stroke-width="1.3"/><path d="M7.5,0.3l2.4,2.8h-4.8zM7.5,14.7l2.4,-2.8h-4.8zM0.3,7.5l2.8,-2.4v4.8zM14.7,7.5l-2.8,-2.4v4.8z" fill="#151515"/></svg><svg class="a" style="left:308.5px;top:12.0px" width="16" height="16" viewBox="0 0 16 16"><rect x="1.5" y="1" width="13.5" height="13.5" fill="#d6b95c"/><rect x="1.5" y="7.5" width="7" height="7" fill="#f6f6f6" stroke="#999" stroke-width="0.7"/></svg><svg class="a" style="left:327.5px;top:12.0px" width="16" height="16" viewBox="0 0 16 16"><polygon points="4.0,4.5 9.7,4.5 12.5,7.3 12.5,12.2 9.7,15.0 4.0,15.0 1.2,12.2 1.2,7.3" fill="#d6b95c"/><path d="M2.0,7.1 q5.7,-0.8 9.7,0" stroke="#b3953c" stroke-width="0.6" fill="none"/><path d="M2.0,9.8 q5.7,-0.8 9.7,0" stroke="#b3953c" stroke-width="0.6" fill="none"/><path d="M2.0,12.4 q5.7,-0.8 9.7,0" stroke="#b3953c" stroke-width="0.6" fill="none"/><circle cx="12.8" cy="4.2" r="2.4" fill="#f59a10"/><path d="M12.8,0.4v1.2M12.8,6.8v1.2M9,4.2h1.2M15.4,4.2h1.2M10.2,1.6l0.8,0.8M14.6,6l0.8,0.8M10.2,6.8l0.8,-0.8M14.6,2.4l0.8,-0.8" stroke="#f59a10" stroke-width="0.6"/></svg><svg class="a" style="left:351.5px;top:12.0px" width="17" height="16" viewBox="0 0 17 16"><path d="M1.5,14V6l3,-3 2,1v10zM6.5,12V5l2.5,-2 1.5,1v8zM11,11V4l3,-3 1.5,1v9z" fill="#d6d6d6" stroke="#8e8e8e" stroke-width="0.6"/><path d="M5,8l2,-1M9.5,6.5l2,-1" stroke="#3a98e0" stroke-width="1"/></svg><svg class="a" style="left:371.5px;top:12.0px" width="17" height="16" viewBox="0 0 17 16"><rect x="1" y="5" width="13" height="10" fill="#e0e0e0" stroke="#999" stroke-width="0.5"/><rect x="1" y="4" width="6.5" height="6.5" fill="#4a9de0"/><polygon points="1,4 3,2 9.5,2 7.5,4" fill="#7cbcf0"/><path d="M1,10.5h13M7.5,5v10" stroke="#aaa" stroke-width="0.5"/><path d="M12,1v7M8.5,4.5h7" stroke="#18a040" stroke-width="1.8"/></svg><svg class="a" style="left:392.0px;top:12.0px" width="16" height="16" viewBox="0 0 16 16"><path d="M1.5,15V5l3,-3.5 1.5,1V13.5zM9,15V5l3.5,-3.5 2.5,1.5v12.5z" fill="#dcdcdc" stroke="#8e8e8e" stroke-width="0.6"/><path d="M7.5,8l1.5,-1" stroke="#3a98e0" stroke-width="1"/></svg><svg class="a" style="left:411.0px;top:12.0px" width="16" height="16" viewBox="0 0 16 16"><rect x="1" y="1" width="4" height="4" fill="#3a98e0"/><rect x="1" y="5" width="6" height="10" fill="#f0f0f0" stroke="#aaa" stroke-width="0.5"/><rect x="6" y="4.5" width="9" height="10.5" fill="#f4f4f4" stroke="#888" stroke-width="0.6"/><rect x="6" y="4.5" width="9" height="1.5" fill="#555"/><path d="M6,8h9M6,10.5h9M6,13h9M9,6v9M12,6v9M1,8h5M1,11h5" stroke="#aaa" stroke-width="0.4"/></svg><svg class="a" style="left:436.5px;top:12.0px" width="17" height="16" viewBox="0 0 17 16"><polygon points="1,4 4,1 13,1 13,11 10,14 1,14" fill="#e4e4e4" stroke="#aaa" stroke-width="0.5"/><polygon points="10,4 13,1 13,11 10,14" fill="#cfcfcf"/><path d="M9,11.5h6M9,14.5h6" stroke="#666" stroke-width="0.7"/><circle cx="11" cy="11.5" r="1.1" fill="#3a98e0"/><circle cx="13" cy="14.5" r="1.1" fill="#555"/></svg><svg class="a" style="left:456.3px;top:12.0px" width="17" height="16" viewBox="0 0 17 16"><rect x="1" y="1" width="14" height="12.5" fill="#f4f4f4" stroke="#777" stroke-width="0.6"/><rect x="1" y="1" width="14" height="2.2" fill="#666"/><path d="M1,6h14M1,9h14M5,3.2v10.3M9,3.2v10.3" stroke="#999" stroke-width="0.5"/><path d="M9,11.5h6.5M9,14.5h6.5" stroke="#555" stroke-width="0.7"/><circle cx="11.5" cy="11.5" r="1.1" fill="#3a98e0"/><circle cx="13.5" cy="14.5" r="1.1" fill="#444"/></svg><svg class="a" style="left:494.5px;top:12.0px" width="16" height="16" viewBox="0 0 16 16"><polygon points="1,5 4,1.5 4,14 1,15" fill="#e0e0e0" stroke="#888" stroke-width="0.4"/><polygon points="4,1.5 8,1 8,13 4,14" fill="#48b868"/><polygon points="1,5 4,1.5 8,1 5,4.5" fill="#f2f2f2"/><polygon points="10.5,5 14,1.5 14,12.5 10.5,15" fill="#e8905a"/></svg><svg class="a" style="left:537.5px;top:15.5px" width="14" height="10" viewBox="0 0 14 10"><path d="M1,1v5M13,1v5" stroke="#777" stroke-width="0.7"/><path d="M1.5,3.5h11" stroke="#555" stroke-width="0.7"/><path d="M1.5,3.5l2,-1.2v2.4zM12.5,3.5l-2,-1.2v2.4z" fill="#444"/><rect x="1" y="5.6" width="12" height="3.2" fill="#f0a000"/><path d="M3,5.6v1M5,5.6v1M7,5.6v1M9,5.6v1M11,5.6v1" stroke="#c07800" stroke-width="0.4"/></svg><svg class="a" style="left:569.0px;top:12.0px" width="16" height="16" viewBox="0 0 16 16"><rect x="0.5" y="1" width="11" height="3.5" rx="1" fill="#3a90d8"/><rect x="3" y="4.5" width="6" height="10" fill="#5aa4e4"/><path d="M3,6.5h6M3,8.5h6M3,10.5h6M3,12.5h6" stroke="#3a7cc0" stroke-width="0.5"/><path d="M10.5,8.5v7M7,12h7" stroke="#18a040" stroke-width="1.9"/></svg><svg class="a" style="left:588.3px;top:12.0px" width="15" height="15" viewBox="0 0 15 15"><rect x="0.5" y="1" width="13.5" height="13" fill="#4ca4e8"/><circle cx="10.5" cy="4.5" r="1.5" fill="#f4f0c0"/><path d="M0.5,14V10l3.5,-3.5 3.5,4 2.5,-2 4,3.5V14z" fill="#2e7cc8"/></svg><svg class="a" style="left:617.5px;top:12.0px" width="16" height="17" viewBox="0 0 16 17"><rect x="1" y="1.5" width="12" height="8.5" fill="none" stroke="#40b860" stroke-width="0.9" stroke-dasharray="1.3,1"/><path d="M10,8.5v7l1.6,-1.5 1.3,2.4 1,-0.5 -1.2,-2.3h2.3z" fill="#ddd" stroke="#555" stroke-width="0.6"/></svg><svg class="a" style="left:653.5px;top:12.0px" width="16" height="16" viewBox="0 0 16 16"><rect x="1" y="2" width="14" height="13" rx="2.5" fill="#555"/><rect x="1.5" y="2.5" width="13" height="3.5" rx="1.5" fill="#e6e6e6"/><path d="M3,13l3.5,-4 2,2 1.5,-1.5 3,3.5z" fill="#fff"/><path d="M8,5.5v3.5l-1.5,-1.5M8,9l1.5,-1.5" stroke="#f07020" stroke-width="1.1" fill="none"/></svg>
</div>
<div class="a" style="left:4px;top:41px;width:136px;height:11px;background:#f3f3f3"></div>
<div class="a" style="left:8px;top:46px;width:3px;height:1px;background:#777"></div>
<div class="a" style="left:131.5px;top:46px;width:3px;height:1px;background:#777"></div>
<div class="bt" style="left:17px;top:43.5px;color:#888;letter-spacing:0.28px;font-size:4.7px">BROWSER</div>
<div class="a" style="left:20px;top:55.2px;width:12px;height:8.5px;background:#f3f3f3"></div>
<svg class="a" style="left:11.3px;top:57.8px" width="6" height="4" viewBox="0 0 6 4"><path d="M0.8,0.8 L3,3 L5.2,0.8" fill="none" stroke="#555" stroke-width="0.8"/></svg>
<svg class="a" style="left:21.5px;top:56.4px" width="8" height="6" viewBox="0 0 8 6"><path d="M0.2,3 Q4,-1.2 7.8,3 Q4,7.2 0.2,3z" fill="#606060"/><ellipse cx="4" cy="3" rx="1.7" ry="1.5" fill="#fff"/><circle cx="4" cy="3" r="0.9" fill="#555"/></svg>
<div class="a" style="left:32px;top:55.2px;width:62px;height:8.5px;background:#dcdcdc"></div>
<svg class="a" style="left:33px;top:55.4px" width="8" height="8" viewBox="0 0 8 8"><path d="M1,2.5 L3,0.8 L7,0.8 L7,5.5 L5,7.2 L1,7.2z" fill="#4a9ae0"/><path d="M1,2.5 L5,2.5 L7,0.8 M5,2.5 L5,7.2" stroke="#8cc4f0" stroke-width="0.5" fill="none"/></svg>
<div class="bt" style="left:47px;top:56.5px;font-weight:bold;color:#333;font-size:4.95px">Unedited Map v2</div>
<svg class="a" style="left:95.5px;top:55.9px" width="7" height="7" viewBox="0 0 7 7"><circle cx="3.5" cy="3.5" r="3" fill="#eee" stroke="#999" stroke-width="0.6"/><circle cx="3.5" cy="3.5" r="1.3" fill="#333"/></svg>
<div class="a" style="left:29px;top:66.0px;width:67px;height:8.5px;background:#f2f2f2"></div>
<svg class="a" style="left:21.0px;top:67.2px" width="4" height="6" viewBox="0 0 4 6"><path d="M0.8,0.8 L3,3 L0.8,5.2" fill="none" stroke="#555" stroke-width="0.8"/></svg>
<svg class="a" style="left:29.5px;top:66.2px" width="8" height="8" viewBox="0 0 8 8"><circle cx="4" cy="4" r="2.4" fill="none" stroke="#555" stroke-width="1.4"/><path d="M4,0.3V1.6M4,6.4V7.7M0.3,4H1.6M6.4,4H7.7M1.4,1.4L2.3,2.3M5.7,5.7L6.6,6.6M1.4,6.6L2.3,5.7M5.7,2.3L6.6,1.4" stroke="#555" stroke-width="1.1"/></svg>
<div class="bt" style="left:43.5px;top:67.2px">Document Settings</div>
<div class="a" style="left:29px;top:76.8px;width:53px;height:8.5px;background:#f2f2f2"></div>
<svg class="a" style="left:21.0px;top:78.0px" width="4" height="6" viewBox="0 0 4 6"><path d="M0.8,0.8 L3,3 L0.8,5.2" fill="none" stroke="#555" stroke-width="0.8"/></svg>
<svg class="a" style="left:29.5px;top:77.5px" width="8" height="7" viewBox="0 0 8 7"><path d="M0.5,0.8h3l0.8,1h3.2v5h-7z" fill="#f4f4f4" stroke="#888" stroke-width="0.6"/><line x1="0.5" y1="2" x2="7.5" y2="2" stroke="#888" stroke-width="0.5"/></svg>
<div class="bt" style="left:43.5px;top:77.9px">Named Views</div>
<div class="a" style="left:29px;top:88.0px;width:46px;height:8.5px;background:#f2f2f2"></div>
<svg class="a" style="left:21.0px;top:89.2px" width="4" height="6" viewBox="0 0 4 6"><path d="M0.8,0.8 L3,3 L0.8,5.2" fill="none" stroke="#555" stroke-width="0.8"/></svg>
<svg class="a" style="left:29.5px;top:89.2px" width="8" height="6" viewBox="0 0 8 6"><path d="M0.2,3 Q4,-1.2 7.8,3 Q4,7.2 0.2,3z" fill="#606060"/><ellipse cx="4" cy="3" rx="1.7" ry="1.5" fill="#fff"/><circle cx="4" cy="3" r="0.9" fill="#555"/></svg>
<svg class="a" style="left:40.5px;top:88.7px" width="8" height="7" viewBox="0 0 8 7"><path d="M0.5,0.8h3l0.8,1h3.2v5h-7z" fill="#f4f4f4" stroke="#888" stroke-width="0.6"/><line x1="0.5" y1="2" x2="7.5" y2="2" stroke="#888" stroke-width="0.5"/></svg>
<div class="bt" style="left:55px;top:89.0px">Origin</div>
<div class="a" style="left:29px;top:98.4px;width:48px;height:8.5px;background:#f2f2f2"></div>
<svg class="a" style="left:21.0px;top:99.6px" width="4" height="6" viewBox="0 0 4 6"><path d="M0.8,0.8 L3,3 L0.8,5.2" fill="none" stroke="#555" stroke-width="0.8"/></svg>
<svg class="a" style="left:29.5px;top:99.6px" width="8" height="6" viewBox="0 0 8 6"><path d="M0.2,3 Q4,-1.2 7.8,3 Q4,7.2 0.2,3z" fill="#606060"/><ellipse cx="4" cy="3" rx="1.7" ry="1.5" fill="#fff"/><circle cx="4" cy="3" r="0.9" fill="#555"/></svg>
<svg class="a" style="left:40.5px;top:99.1px" width="8" height="7" viewBox="0 0 8 7"><path d="M0.5,0.8h3l0.8,1h3.2v5h-7z" fill="#f4f4f4" stroke="#888" stroke-width="0.6"/><line x1="0.5" y1="2" x2="7.5" y2="2" stroke="#888" stroke-width="0.5"/></svg>
<div class="bt" style="left:55px;top:99.4px">Bodies</div>
<div class="a" style="left:29px;top:109.4px;width:53px;height:8.5px;background:#f2f2f2"></div>
<svg class="a" style="left:21.0px;top:110.6px" width="4" height="6" viewBox="0 0 4 6"><path d="M0.8,0.8 L3,3 L0.8,5.2" fill="none" stroke="#555" stroke-width="0.8"/></svg>
<svg class="a" style="left:29.5px;top:110.6px" width="8" height="6" viewBox="0 0 8 6"><path d="M0.2,3 Q4,-1.2 7.8,3 Q4,7.2 0.2,3z" fill="#606060"/><ellipse cx="4" cy="3" rx="1.7" ry="1.5" fill="#fff"/><circle cx="4" cy="3" r="0.9" fill="#555"/></svg>
<svg class="a" style="left:40.5px;top:110.1px" width="8" height="7" viewBox="0 0 8 7"><path d="M0.5,0.8h3l0.8,1h3.2v5h-7z" fill="#f4f4f4" stroke="#888" stroke-width="0.6"/><line x1="0.5" y1="2" x2="7.5" y2="2" stroke="#888" stroke-width="0.5"/></svg>
<div class="bt" style="left:55px;top:110.4px">Sketches</div>
<div class="a" style="left:39.5px;top:105px;width:37px;height:0;border-top:1px dashed #3a9ad8"></div>
<div class="a" style="left:635.5px;top:85px;width:114.5px;height:150.8px;background:#f4f4f4;border:0.8px solid #dadada"></div>
<div class="a" style="left:636px;top:85px;width:114px;height:11px;background:#efefef;border-bottom:0.5px solid #e2e2e2"></div>
<div class="a" style="left:641.5px;top:90px;width:3px;height:0.9px;background:#666"></div>
<div class="pl" style="left:649px;top:87.4px;color:#555;letter-spacing:0.35px;font-size:4.6px">PLANE CUT</div>
<div class="pl" style="left:742px;top:86.2px;color:#777;font-size:6.5px">&#187;</div>
<div class="pl" style="left:641.5px;top:100.2px">Body</div>
<div class="pl" style="left:641.5px;top:113.6px">Cut Plane</div>
<div class="pl" style="left:641.5px;top:127.5px">Flip</div>
<div class="pl" style="left:641.5px;top:140.8px">Type</div>
<div class="pl" style="left:641.5px;top:154.6px">Fill Type</div>
<div class="pl" style="left:641.5px;top:182.1px">X Distance</div>
<div class="pl" style="left:641.5px;top:195.8px">Y Angle</div>
<div class="pl" style="left:641.5px;top:209.3px">Z Angle</div>
<div class="a" style="left:675px;top:96.8px;width:38px;height:12px;background:#f4f4f4;border:0.8px solid #cfcfcf"></div>
<svg class="a" style="left:677.5px;top:98.8px" width="5" height="7" viewBox="0 0 5 7"><path d="M0.6,0.6 L0.6,5.8 L1.8,4.6 L2.8,6.6 L3.6,6.2 L2.7,4.3 L4.3,4.3z" fill="#fff" stroke="#555" stroke-width="0.6"/></svg>
<div class="pl" style="left:684px;top:100.1px;color:#333">1 selected</div>
<div class="pl" style="left:718px;top:99.0px;color:#888;font-size:7px">&#215;</div>
<div class="a" style="left:675px;top:110.4px;width:38px;height:12px;background:#f4f4f4;border:0.8px solid #cfcfcf"></div>
<svg class="a" style="left:677.5px;top:112.4px" width="5" height="7" viewBox="0 0 5 7"><path d="M0.6,0.6 L0.6,5.8 L1.8,4.6 L2.8,6.6 L3.6,6.2 L2.7,4.3 L4.3,4.3z" fill="#fff" stroke="#555" stroke-width="0.6"/></svg>
<div class="pl" style="left:684px;top:113.7px;color:#333">1 selected</div>
<div class="pl" style="left:718px;top:112.6px;color:#888;font-size:7px">&#215;</div>
<svg class="a" style="left:677.5px;top:126px" width="6" height="7" viewBox="0 0 6 7"><path d="M4.6,0.8 L3,3.4" stroke="#777" stroke-width="0.7"/><path d="M3,3.4 L1.4,6.2" stroke="#3a8ad8" stroke-width="0.9"/><path d="M3.6,0.6 L4.9,0.6 L4.9,1.9" fill="none" stroke="#555" stroke-width="0.6"/><path d="M0.9,4.9 L1.2,6.4 L2.7,6.2" fill="none" stroke="#3a8ad8" stroke-width="0.7"/></svg>
<div class="fld" style="left:675px;top:137.7px;width:59.5px;height:11.7px"></div>
<div class="pl" style="left:730px;top:139.7px;color:#555;font-size:4px">&#9660;</div>
<div class="fld" style="left:675px;top:152.3px;width:59.5px;height:10.9px"></div>
<div class="pl" style="left:730px;top:154.3px;color:#555;font-size:4px">&#9660;</div>
<div class="pl" style="left:679px;top:140.8px;color:#333">Trim</div>
<div class="a" style="left:677px;top:154.3px;width:6.5px;height:6.5px;border:1.1px solid #b89a50;background:#fff"></div>
<div class="pl" style="left:686px;top:154.9px;color:#333">No Fill</div>
<div class="pl" style="left:641px;top:166.6px;color:#444;font-size:5px">&#9660;</div>
<div class="pl" style="left:647.3px;top:167.5px;color:#333;font-weight:bold">Numerical Inputs</div>
<div class="fld" style="left:676px;top:179.7px;width:57.4px;height:10.3px;border-color:#fff"></div>
<div class="pl" style="left:680px;top:182.1px;color:#333">0.00 in</div>
<div class="fld" style="left:676px;top:193.0px;width:57.4px;height:10.3px;border-color:#fff"></div>
<div class="pl" style="left:680px;top:195.4px;color:#333">0.0 deg</div>
<div class="fld" style="left:676px;top:206.5px;width:57.4px;height:10.3px;border-color:#fff"></div>
<div class="pl" style="left:680px;top:208.9px;color:#333">0.0 deg</div>
<div class="a" style="left:636px;top:218.6px;width:114px;height:0.6px;background:#e0e0e0"></div>
<div class="a" style="left:639.6px;top:224.4px;width:6px;height:6px;border-radius:50%;background:#777"></div>
<div class="a" style="left:642.1px;top:225.5px;width:1px;height:3.5px;background:#fff"></div>
<div class="a" style="left:688.3px;top:222.4px;width:19.7px;height:10.6px;background:#f4f4f4;border:0.8px solid #cdcdcd;border-radius:1px"></div>
<div class="pl" style="left:694.5px;top:224.8px;color:#333">OK</div>
<div class="a" style="left:714.2px;top:222.4px;width:28.6px;height:10.6px;background:#f4f4f4;border:0.8px solid #cdcdcd;border-radius:1px"></div>
<div class="pl" style="left:719.5px;top:224.8px;color:#333">Cancel</div>
<svg class="a" style="left:710px;top:47.5px" width="36" height="34" viewBox="0 0 36 34">
<path d="M6.5,6.5 L10,3 L26,3 L29,6.5 L29,26 L26,29.5 L10,29.5 L6.5,26z" fill="#f1f1f1" stroke="#c4c4c4" stroke-width="0.7"/><path d="M26,10 L29,6.5 L29,26 L26,29.5z" fill="#e2e2e2"/>
<path d="M10,29.5 L10,10 L26,10 L26,29.5 M10,10 L6.5,6.5 M26,10 L29,6.5" fill="none" stroke="#d0d0d0" stroke-width="0.5"/>
<text x="12" y="22.5" font-size="3.6" fill="#8a8a8a" font-family="Liberation Sans" transform="rotate(-6 12 22)">FRONT</text>
<text x="14" y="8" font-size="2.6" fill="#999" font-family="Liberation Sans">TOP</text>
<line x1="9.5" y1="6" x2="9.8" y2="29.5" stroke="#6a6ae8" stroke-width="0.9"/>
<text x="7.5" y="8.5" font-size="3.2" fill="#6a6ae8" font-family="Liberation Sans">Z</text>
<line x1="9.8" y1="29.5" x2="29.5" y2="26.5" stroke="#e46a6a" stroke-width="0.9"/>
<line x1="4.5" y1="15.5" x2="9.8" y2="29.5" stroke="#70c870" stroke-width="0.6"/>
<text x="30" y="28" font-size="3.4" fill="#e46a6a" font-family="Liberation Sans">X</text>
</svg>
<div class="a" style="left:4px;top:445px;width:136px;height:11px;background:#f3f3f3"></div>
<div class="bt" style="left:16.5px;top:447.5px;color:#777;letter-spacing:0.3px;font-size:4.8px">COMMENTS</div>
<div class="bt" style="left:131px;top:446px;color:#777;font-size:7px">+</div>
<div class="a" style="left:322.8px;top:444.8px;width:107.2px;height:11.2px;background:#f0f0f0"></div>
<div class="bt" style="left:701.7px;top:447.7px;color:#222;font-size:5.35px">2 selections</div>
<div class="a" style="left:738px;top:447.5px;width:7.4px;height:7.4px;border-radius:50%;background:#111"></div>
<div class="a" style="left:0;top:458px;width:751px;height:21px;background:#f3f3f3"></div>
<svg class="a" style="left:6.0px;top:466.0px" width="8" height="8" viewBox="0 0 8 8"><rect x="1" y="1" width="1.3" height="6" fill="#888"/><path d="M7,1v6l-4.5,-3z" fill="#888"/></svg><svg class="a" style="left:17.5px;top:466.0px" width="8" height="8" viewBox="0 0 8 8"><path d="M5,1v6l-4.5,-3z" fill="#888"/><circle cx="5.5" cy="4" r="1.3" fill="#888"/></svg><svg class="a" style="left:29.0px;top:465.0px" width="8" height="10" viewBox="0 0 8 10"><path d="M1,1v8l6,-4z" fill="#777"/></svg><svg class="a" style="left:40.0px;top:466.0px" width="8" height="8" viewBox="0 0 8 8"><path d="M3,1v6l4.5,-3z" fill="#888"/><circle cx="2.5" cy="4" r="1.3" fill="#888"/></svg><svg class="a" style="left:51.5px;top:466.0px" width="8" height="8" viewBox="0 0 8 8"><path d="M1,1v6l4.5,-3z" fill="#888"/><rect x="5.7" y="1" width="1.3" height="6" fill="#888"/></svg><div class="a" style="left:72px;top:475.2px;width:245px;height:0.7px;background:#c8c8c8"></div><svg class="a" style="left:68.4px;top:465.0px" width="8" height="8" viewBox="0 0 8 8"><rect x="0.8" y="0.8" width="6.2" height="6.2" fill="none" stroke="#4a9ae0" stroke-width="0.6" stroke-dasharray="1,0.6"/><path d="M3.5,7.5l4,-4l0.6,0.6l-4,4z" fill="#e86040"/></svg><div class="a" style="left:72.4px;top:473.6px;width:0.6px;height:1.8px;background:#bbb"></div><svg class="a" style="left:79.4px;top:465.0px" width="8" height="8" viewBox="0 0 8 8"><rect x="0.8" y="1" width="5.4" height="6.5" fill="#4a9ae0"/><path d="M0.8,1l1,-0.8h5l-0.8,0.8z" fill="#8cc4f0"/><path d="M7,0.5v7" stroke="#777" stroke-width="0.6"/></svg><div class="a" style="left:83.4px;top:473.6px;width:0.6px;height:1.8px;background:#bbb"></div><svg class="a" style="left:90.0px;top:465.0px" width="8" height="8" viewBox="0 0 8 8"><polygon points="2,1.5 6,1.5 7.5,3.5 7.5,6 6,7.5 2,7.5 0.5,6 0.5,3.5" fill="#d6b95c"/><path d="M1,4q3,-0.6 6,0M1,6q3,-0.6 6,0" stroke="#b3953c" stroke-width="0.4" fill="none"/><circle cx="6.3" cy="2" r="1.5" fill="#f59a10"/></svg><div class="a" style="left:94.0px;top:473.6px;width:0.6px;height:1.8px;background:#bbb"></div><svg class="a" style="left:101.0px;top:465.0px" width="8" height="8" viewBox="0 0 8 8"><rect x="0.5" y="0.5" width="7" height="7" fill="#d6b95c"/><rect x="0.8" y="4" width="3.6" height="3.6" fill="#f4f4f4" stroke="#999" stroke-width="0.4"/></svg><div class="a" style="left:105.0px;top:473.6px;width:0.6px;height:1.8px;background:#bbb"></div><svg class="a" style="left:111.4px;top:465.0px" width="8" height="8" viewBox="0 0 8 8"><rect x="0.5" y="0.5" width="7" height="7" fill="#d6b95c"/><rect x="0.8" y="4" width="3.6" height="3.6" fill="#f4f4f4" stroke="#999" stroke-width="0.4"/></svg><div class="a" style="left:115.4px;top:473.6px;width:0.6px;height:1.8px;background:#bbb"></div><svg class="a" style="left:122.8px;top:465.0px" width="8" height="8" viewBox="0 0 8 8"><path d="M4,1.2v5.6M1.2,4h5.6" stroke="#333" stroke-width="0.8"/><path d="M4,0.2l1.3,1.5h-2.6zM4,7.8l1.3,-1.5h-2.6zM0.2,4l1.5,1.3v-2.6zM7.8,4l-1.5,1.3v-2.6z" fill="#222"/></svg><div class="a" style="left:126.8px;top:473.6px;width:0.6px;height:1.8px;background:#bbb"></div><svg class="a" style="left:133.4px;top:465.0px" width="8" height="8" viewBox="0 0 8 8"><path d="M4,1.2v5.6M1.2,4h5.6" stroke="#333" stroke-width="0.8"/><path d="M4,0.2l1.3,1.5h-2.6zM4,7.8l1.3,-1.5h-2.6zM0.2,4l1.5,1.3v-2.6zM7.8,4l-1.5,1.3v-2.6z" fill="#222"/></svg><div class="a" style="left:137.4px;top:473.6px;width:0.6px;height:1.8px;background:#bbb"></div><svg class="a" style="left:144.0px;top:465.0px" width="8" height="8" viewBox="0 0 8 8"><polygon points="2,1.5 6,1.5 7.5,3.5 7.5,6 6,7.5 2,7.5 0.5,6 0.5,3.5" fill="#d6b95c"/><path d="M1,4q3,-0.6 6,0M1,6q3,-0.6 6,0" stroke="#b3953c" stroke-width="0.4" fill="none"/><circle cx="6.3" cy="2" r="1.5" fill="#f59a10"/></svg><div class="a" style="left:148.0px;top:473.6px;width:0.6px;height:1.8px;background:#bbb"></div><svg class="a" style="left:154.9px;top:465.0px" width="8" height="8" viewBox="0 0 8 8"><rect x="0.5" y="0.5" width="7" height="7" fill="#d6b95c"/><rect x="0.8" y="4" width="3.6" height="3.6" fill="#f4f4f4" stroke="#999" stroke-width="0.4"/></svg><div class="a" style="left:158.9px;top:473.6px;width:0.6px;height:1.8px;background:#bbb"></div><svg class="a" style="left:166.0px;top:465.0px" width="8" height="8" viewBox="0 0 8 8"><path d="M4,1.2v5.6M1.2,4h5.6" stroke="#333" stroke-width="0.8"/><path d="M4,0.2l1.3,1.5h-2.6zM4,7.8l1.3,-1.5h-2.6zM0.2,4l1.5,1.3v-2.6zM7.8,4l-1.5,1.3v-2.6z" fill="#222"/></svg><div class="a" style="left:170.0px;top:473.6px;width:0.6px;height:1.8px;background:#bbb"></div><svg class="a" style="left:177.3px;top:465.0px" width="8" height="8" viewBox="0 0 8 8"><path d="M4,1.2v5.6M1.2,4h5.6" stroke="#333" stroke-width="0.8"/><path d="M4,0.2l1.3,1.5h-2.6zM4,7.8l1.3,-1.5h-2.6zM0.2,4l1.5,1.3v-2.6zM7.8,4l-1.5,1.3v-2.6z" fill="#222"/></svg><div class="a" style="left:181.3px;top:473.6px;width:0.6px;height:1.8px;background:#bbb"></div><svg class="a" style="left:188.1px;top:465.0px" width="8" height="8" viewBox="0 0 8 8"><polygon points="2,1.5 6,1.5 7.5,3.5 7.5,6 6,7.5 2,7.5 0.5,6 0.5,3.5" fill="#d6b95c"/><path d="M1,4q3,-0.6 6,0M1,6q3,-0.6 6,0" stroke="#b3953c" stroke-width="0.4" fill="none"/><circle cx="6.3" cy="2" r="1.5" fill="#f59a10"/></svg><div class="a" style="left:192.1px;top:473.6px;width:0.6px;height:1.8px;background:#bbb"></div><svg class="a" style="left:198.5px;top:465.0px" width="8" height="8" viewBox="0 0 8 8"><rect x="0.5" y="0.5" width="7" height="7" fill="#d6b95c"/><rect x="0.8" y="4" width="3.6" height="3.6" fill="#f4f4f4" stroke="#999" stroke-width="0.4"/></svg><div class="a" style="left:202.5px;top:473.6px;width:0.6px;height:1.8px;background:#bbb"></div><svg class="a" style="left:209.7px;top:465.0px" width="8" height="8" viewBox="0 0 8 8"><path d="M4,1.2v5.6M1.2,4h5.6" stroke="#333" stroke-width="0.8"/><path d="M4,0.2l1.3,1.5h-2.6zM4,7.8l1.3,-1.5h-2.6zM0.2,4l1.5,1.3v-2.6zM7.8,4l-1.5,1.3v-2.6z" fill="#222"/></svg><div class="a" style="left:213.7px;top:473.6px;width:0.6px;height:1.8px;background:#bbb"></div><svg class="a" style="left:220.8px;top:465.0px" width="8" height="8" viewBox="0 0 8 8"><path d="M4,1.2v5.6M1.2,4h5.6" stroke="#333" stroke-width="0.8"/><path d="M4,0.2l1.3,1.5h-2.6zM4,7.8l1.3,-1.5h-2.6zM0.2,4l1.5,1.3v-2.6zM7.8,4l-1.5,1.3v-2.6z" fill="#222"/></svg><div class="a" style="left:224.8px;top:473.6px;width:0.6px;height:1.8px;background:#bbb"></div><svg class="a" style="left:232.0px;top:465.0px" width="8" height="8" viewBox="0 0 8 8"><path d="M4,1.2v5.6M1.2,4h5.6" stroke="#333" stroke-width="0.8"/><path d="M4,0.2l1.3,1.5h-2.6zM4,7.8l1.3,-1.5h-2.6zM0.2,4l1.5,1.3v-2.6zM7.8,4l-1.5,1.3v-2.6z" fill="#222"/></svg><div class="a" style="left:236.0px;top:473.6px;width:0.6px;height:1.8px;background:#bbb"></div><svg class="a" style="left:243.0px;top:465.0px" width="8" height="8" viewBox="0 0 8 8"><path d="M4,1.2v5.6M1.2,4h5.6" stroke="#333" stroke-width="0.8"/><path d="M4,0.2l1.3,1.5h-2.6zM4,7.8l1.3,-1.5h-2.6zM0.2,4l1.5,1.3v-2.6zM7.8,4l-1.5,1.3v-2.6z" fill="#222"/></svg><div class="a" style="left:247.0px;top:473.6px;width:0.6px;height:1.8px;background:#bbb"></div><svg class="a" style="left:253.8px;top:465.0px" width="8" height="8" viewBox="0 0 8 8"><rect x="0.5" y="0.5" width="7" height="7" fill="#d6b95c"/><rect x="0.8" y="4" width="3.6" height="3.6" fill="#f4f4f4" stroke="#999" stroke-width="0.4"/></svg><div class="a" style="left:257.8px;top:473.6px;width:0.6px;height:1.8px;background:#bbb"></div><svg class="a" style="left:264.6px;top:465.0px" width="8" height="8" viewBox="0 0 8 8"><path d="M4,1.2v5.6M1.2,4h5.6" stroke="#333" stroke-width="0.8"/><path d="M4,0.2l1.3,1.5h-2.6zM4,7.8l1.3,-1.5h-2.6zM0.2,4l1.5,1.3v-2.6zM7.8,4l-1.5,1.3v-2.6z" fill="#222"/></svg><div class="a" style="left:268.6px;top:473.6px;width:0.6px;height:1.8px;background:#bbb"></div><svg class="a" style="left:275.5px;top:465.0px" width="8" height="8" viewBox="0 0 8 8"><path d="M4,1.2v5.6M1.2,4h5.6" stroke="#333" stroke-width="0.8"/><path d="M4,0.2l1.3,1.5h-2.6zM4,7.8l1.3,-1.5h-2.6zM0.2,4l1.5,1.3v-2.6zM7.8,4l-1.5,1.3v-2.6z" fill="#222"/></svg><div class="a" style="left:279.5px;top:473.6px;width:0.6px;height:1.8px;background:#bbb"></div><svg class="a" style="left:286.6px;top:465.0px" width="8" height="8" viewBox="0 0 8 8"><path d="M4,1.2v5.6M1.2,4h5.6" stroke="#333" stroke-width="0.8"/><path d="M4,0.2l1.3,1.5h-2.6zM4,7.8l1.3,-1.5h-2.6zM0.2,4l1.5,1.3v-2.6zM7.8,4l-1.5,1.3v-2.6z" fill="#222"/></svg><div class="a" style="left:290.6px;top:473.6px;width:0.6px;height:1.8px;background:#bbb"></div><svg class="a" style="left:297.5px;top:465.0px" width="8" height="8" viewBox="0 0 8 8"><path d="M4,1.2v5.6M1.2,4h5.6" stroke="#333" stroke-width="0.8"/><path d="M4,0.2l1.3,1.5h-2.6zM4,7.8l1.3,-1.5h-2.6zM0.2,4l1.5,1.3v-2.6zM7.8,4l-1.5,1.3v-2.6z" fill="#222"/></svg><div class="a" style="left:301.5px;top:473.6px;width:0.6px;height:1.8px;background:#bbb"></div><svg class="a" style="left:308.5px;top:465.0px" width="8" height="8" viewBox="0 0 8 8"><path d="M4,1.2v5.6M1.2,4h5.6" stroke="#333" stroke-width="0.8"/><path d="M4,0.2l1.3,1.5h-2.6zM4,7.8l1.3,-1.5h-2.6zM0.2,4l1.5,1.3v-2.6zM7.8,4l-1.5,1.3v-2.6z" fill="#222"/></svg><div class="a" style="left:312.5px;top:473.6px;width:0.6px;height:1.8px;background:#bbb"></div><svg class="a" style="left:79.9px;top:460.5px" width="7" height="3" viewBox="0 0 7 3"><path d="M0.5,2.5l1,-2l1,2l1,-2l1,2l1,-2l1,2" stroke="#4aa0e8" stroke-width="0.5" fill="none"/></svg><svg class="a" style="left:188.6px;top:460.5px" width="7" height="3" viewBox="0 0 7 3"><path d="M0.5,2.5l1,-2l1,2l1,-2l1,2l1,-2l1,2" stroke="#4aa0e8" stroke-width="0.5" fill="none"/></svg><svg class="a" style="left:287.1px;top:460.5px" width="7" height="3" viewBox="0 0 7 3"><path d="M0.5,2.5l1,-2l1,2l1,-2l1,2l1,-2l1,2" stroke="#4aa0e8" stroke-width="0.5" fill="none"/></svg><svg class="a" style="left:312.5px;top:462.0px" width="9" height="16" viewBox="0 0 9 16"><path d="M1,0.8h7v1.8l-2.5,2.2v0z" fill="#111"/><path d="M1,0.8h7l-1,2.6h-5z" fill="#111"/><rect x="3.8" y="2.5" width="1.5" height="13" fill="#111"/></svg><svg class="a" style="left:737.0px;top:465.5px" width="9" height="9" viewBox="0 0 9 9"><circle cx="4.5" cy="4.5" r="2.3" fill="none" stroke="#555" stroke-width="1.2"/><path d="M4.5,0.4v1.6M4.5,7v1.6M0.4,4.5h1.6M7,4.5h1.6M1.6,1.6l1.1,1.1M6.3,6.3l1.1,1.1M1.6,7.4l1.1,-1.1M6.3,2.7l1.1,-1.1" stroke="#555" stroke-width="1.2"/></svg><svg class="a" style="left:737.5px;top:447.0px" width="8" height="8" viewBox="0 0 8 8"><path d="M4.2,0.6a3.7,3.7 0 1 1 -2.6,6.3l-1,1l0.3,-1.8a3.7,3.7 0 0 1 3.3,-5.5z" fill="#111"/><path d="M2.5,5a1.8,1.6 0 0 1 3.5,0" stroke="#fff" stroke-width="0.7" fill="none"/><circle cx="4.2" cy="5.2" r="0.6" fill="#fff"/></svg><svg class="a" style="left:323.0px;top:445.5px" width="9" height="9" viewBox="0 0 9 9"><ellipse cx="4.2" cy="4.2" rx="3.6" ry="1.7" fill="none" stroke="#666" stroke-width="0.8"/><path d="M4.2,0.3v7.8" stroke="#3aa0ec" stroke-width="0.7"/></svg><svg class="a" style="left:333.7px;top:448.5px" width="3" height="3" viewBox="0 0 3 3"><path d="M0.2,0.8h2.6l-1.3,1.6z" fill="#666"/></svg><svg class="a" style="left:384.7px;top:448.5px" width="3" height="3" viewBox="0 0 3 3"><path d="M0.2,0.8h2.6l-1.3,1.6z" fill="#666"/></svg><svg class="a" style="left:398.8px;top:448.5px" width="3" height="3" viewBox="0 0 3 3"><path d="M0.2,0.8h2.6l-1.3,1.6z" fill="#666"/></svg><svg class="a" style="left:412.5px;top:448.5px" width="3" height="3" viewBox="0 0 3 3"><path d="M0.2,0.8h2.6l-1.3,1.6z" fill="#666"/></svg><svg class="a" style="left:426.9px;top:448.5px" width="3" height="3" viewBox="0 0 3 3"><path d="M0.2,0.8h2.6l-1.3,1.6z" fill="#666"/></svg><svg class="a" style="left:339.5px;top:446.0px" width="8" height="8" viewBox="0 0 8 8"><rect x="0.8" y="2.5" width="6.2" height="4.6" fill="#4a9ae0" stroke="#777" stroke-width="0.5"/><path d="M0.8,2.5l0.8,-1.7h1.5l-0.5,1.7M3.5,2.5l0.5,-1.7h1.5l-0.5,1.7" stroke="#777" stroke-width="0.5" fill="#ccc"/></svg><svg class="a" style="left:351.5px;top:445.5px" width="8" height="9" viewBox="0 0 8 9"><path d="M2,8c-1,-1 -1.5,-2.5 -1.5,-3.5l0.8,-0.5l1,1.2v-4l1,-0.4l0.4,3v-3.3l1,-0.2l0.4,3.3l0.3,-2.8l1,0.2v3l0.6,-1.8l0.8,0.3l-0.6,3.5c-0.3,1 -1,2 -1.5,2z" fill="#f6f6f6" stroke="#aaa" stroke-width="0.5"/></svg><svg class="a" style="left:362.5px;top:445.5px" width="9" height="9" viewBox="0 0 9 9"><circle cx="3.6" cy="4.2" r="2.4" fill="none" stroke="#666" stroke-width="0.8"/><path d="M5.3,6l2.3,2.3" stroke="#c08040" stroke-width="1"/><path d="M7.2,0.5v2.6M5.9,1.8h2.6" stroke="#666" stroke-width="0.6"/></svg><svg class="a" style="left:372.5px;top:445.5px" width="10" height="10" viewBox="0 0 10 10"><rect x="0.7" y="0.7" width="8" height="8" rx="1" fill="#e4e4e4" stroke="#888" stroke-width="0.6"/><circle cx="4.5" cy="4.5" r="2.4" fill="none" stroke="#999" stroke-width="0.7"/><path d="M7,7l2,2" stroke="#c08040" stroke-width="0.9"/></svg><svg class="a" style="left:390.0px;top:446.0px" width="8" height="8" viewBox="0 0 8 8"><rect x="0.5" y="0.8" width="7.5" height="5.5" fill="#aaa" stroke="#888" stroke-width="0.5"/><path d="M2.5,7.7h3.5" stroke="#555" stroke-width="0.9"/></svg><svg class="a" style="left:404.0px;top:445.8px" width="7" height="8" viewBox="0 0 7 8"><rect x="0.5" y="0.5" width="6" height="6.8" fill="#ccc" stroke="#999" stroke-width="0.4"/><path d="M0.5,2.8h6M0.5,5h6M3.5,0.5v6.8" stroke="#888" stroke-width="0.5"/></svg><svg class="a" style="left:418.0px;top:445.8px" width="8" height="8" viewBox="0 0 8 8"><rect x="0.5" y="0.5" width="7" height="6.8" fill="#ddd" stroke="#999" stroke-width="0.4"/><path d="M0.5,2.8h7M0.5,5h7M2.8,0.5v6.8M5.2,0.5v6.8" stroke="#999" stroke-width="0.5"/></svg>
<div class="a" style="left:1px;top:0;width:1px;height:478px;background:#e2e2e2"></div>
</body></html>
